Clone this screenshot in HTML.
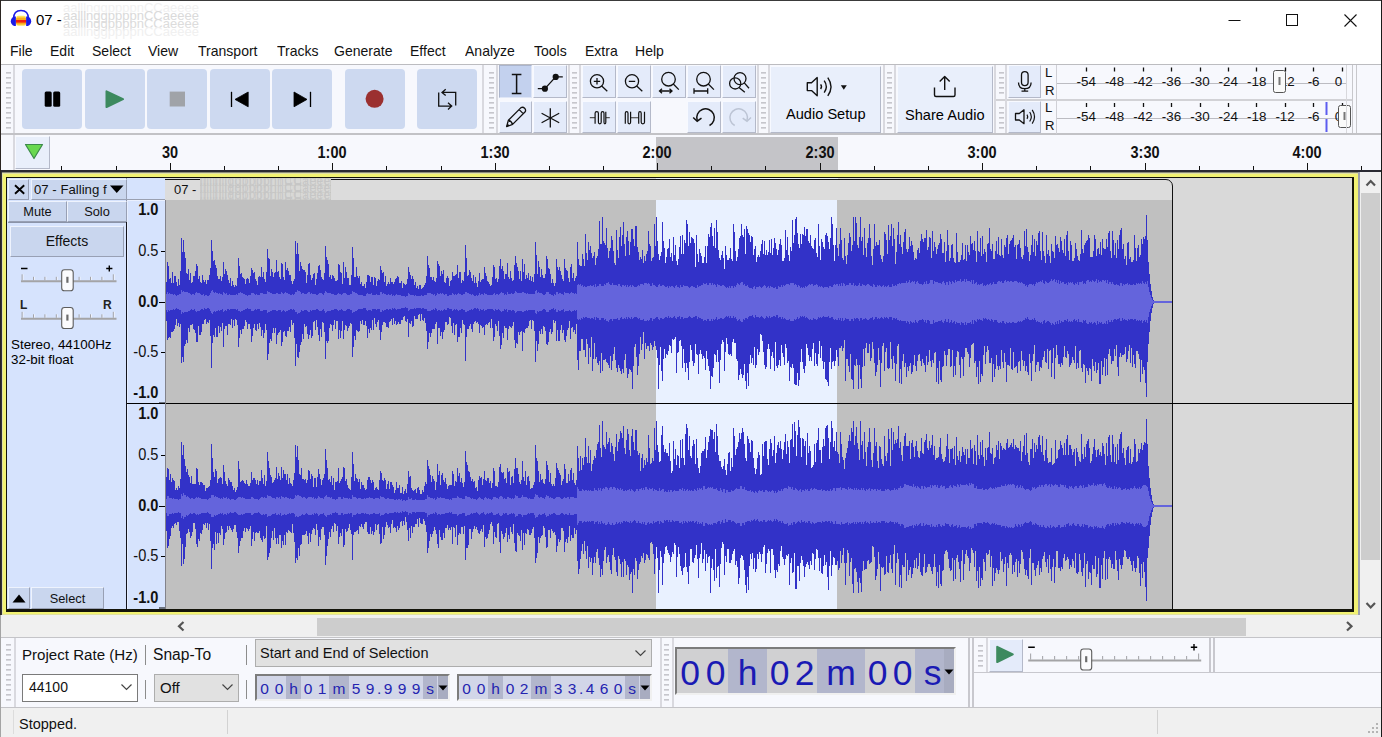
<!DOCTYPE html>
<html lang="en">
<head>
<meta charset="utf-8">
<title>07 - Audacity</title>
<style>
*{box-sizing:border-box;margin:0;padding:0}
html,body{width:1382px;height:737px;overflow:hidden;background:#fff}
body{position:relative;font-family:"Liberation Sans",sans-serif;font-size:14px;color:#000}
.a{position:absolute}
.t{position:absolute;white-space:nowrap;line-height:1}
svg{position:absolute;overflow:visible}
/* title + menu */
#title{left:36px;top:12px;font-size:15px}
.mi{position:absolute;top:43px;font-size:15px;line-height:1;white-space:nowrap;color:#111;transform:scaleX(0.935);transform-origin:0 50%}
/* toolbars */
#tb{left:1px;top:64px;width:1381px;height:71px;background:#f7f8fd;border-top:1px solid #bcbcc0;border-bottom:2px solid #c2c2c6}
.grab{position:absolute;width:5px;background:repeating-linear-gradient(to bottom,#c6c6cc 0,#c6c6cc 1px,#d8d8de 1px,#d8d8de 2px,transparent 2px,transparent 5px)}
.vl{position:absolute;width:2px;background:#d9d9df}
.big{position:absolute;top:69px;width:60px;height:60px;border-radius:4px;background:#cdd9f0}
.sm{position:absolute;width:33px;height:33px;background:#e4ebfa;border:1px solid;border-color:#f7f9ff #b4b9c9 #b4b9c9 #f7f9ff}
.sm.sel{background:#c3d1ee;border-color:#aab4cc #dfe6f6 #dfe6f6 #aab4cc}
.wide{position:absolute;top:66px;height:67px;background:#e9effb;border:1px solid;border-color:#f7f9ff #b4b9c9 #b4b9c9 #f7f9ff}
.mt{position:absolute;font-size:13.2px;line-height:1;white-space:nowrap;color:#111}
/* ruler */
#ruler{left:1px;top:135px;width:1381px;height:35px;background:#f7f8fd}
.rl{position:absolute;top:145px;font-size:14.5px;font-weight:bold;line-height:1;white-space:nowrap;color:#111;transform:translateX(-50%) scaleY(1.13);transform-origin:50% 50%}
/* track */
.tbtn{position:absolute;background:#c9d6ee;border:1px solid;border-color:#eef3fd #98a0b4 #98a0b4 #eef3fd;font-size:12.8px;line-height:1;text-align:center;white-space:nowrap;color:#111}
.vr{position:absolute;font-size:14.6px;line-height:1;white-space:nowrap;text-align:right;width:30.5px;left:128px;color:#111;transform:scaleY(1.1);transform-origin:50% 50%}
.vr b{font-weight:bold}
/* bottom */
#bb{left:1px;top:637px;width:1381px;height:71px;background:#f7f8fd;border-top:1px solid #c4c4c8;border-bottom:1px solid #c4c4c8}
.lab{position:absolute;font-size:14.5px;line-height:1;white-space:nowrap;color:#111}
.combo{position:absolute;height:28px;border:1px solid #adadad;background:#e1e1e1;font-size:14px;line-height:25px;padding-left:6px;white-space:nowrap;color:#111}
.tc{position:absolute;height:27px;background:#d2d6e8;border:2px solid;border-color:#7c7c7c #f0f0f0 #f0f0f0 #7c7c7c;overflow:hidden}
.tc span{position:absolute;top:0;height:23px;line-height:25px;font-size:15.5px;color:#2424b0;text-align:center}
.tc .u{background:#b2b6cc}
.big-tc span{height:44px;line-height:48px;font-size:35.5px;color:#1a1ab4}
#status{left:1px;top:708px;width:1381px;height:29px;background:#f0f0f0}
</style>
</head>
<body>
<!-- window frame -->
<div class="a" style="left:0;top:0;width:1382px;height:1px;background:#3a3a3a"></div>
<div class="a" style="left:0;top:0;width:1px;height:615px;background:#2a2420"></div>
<div class="a" style="left:0;top:615px;width:1px;height:122px;background:#a4a4a4"></div>
<div class="a" style="left:1381px;top:0;width:1px;height:737px;background:#1a1a1a;z-index:9"></div>
<!-- title bar -->
<svg class="a" style="left:9px;top:9px" width="24" height="20" viewBox="0 0 24 20">
  <rect x="7.200" y="6.800" width="9.800" height="10" rx="2" fill="#ffe45a"/>
  <rect x="7" y="8.600" width="10.200" height="6.800" rx="1.500" fill="#f9aa1e"/>
  <rect x="6.800" y="11" width="10.600" height="2.600" fill="#f0200e"/>
  <path d="M4.600 9.500Q4.600 1.400 12 1.400Q19.400 1.400 19.400 9.500" fill="none" stroke="#1a1ae6" stroke-width="1.500"/>
  <path d="M6.900 7.400V17H5.200Q1.800 15.500 1.800 12.200Q1.800 8.900 5.200 7.400Z" fill="#1a1ae6"/>
  <path d="M17.100 7.400V17H18.800Q22.200 15.500 22.200 12.200Q22.200 8.900 18.800 7.400Z" fill="#1a1ae6"/>
</svg>
<div class="t" id="title">07 -</div>
<div class="t" style="left:63px;top:1px;font-size:13px;color:#f1f1f1">aalllnggppppnCCaeeee</div>
<div class="t" style="left:63px;top:9px;font-size:13px;color:#dadada">aalllnggppppnCCaeeee</div>
<div class="t" style="left:63px;top:17px;font-size:13px;color:#dcdcdc">aalllnggppppnCCaeeee</div>
<div class="t" style="left:63px;top:25px;font-size:13px;color:#f0f0f0">aalllnggppppnCCaeeee</div>
<svg class="a" style="left:1220px;top:8px" width="150" height="24" viewBox="0 0 150 24">
  <path d="M8.5 12.5H20.5" stroke="#111" stroke-width="1" fill="none"/>
  <rect x="66.5" y="6.5" width="11" height="11" fill="none" stroke="#111" stroke-width="1"/>
  <path d="M124.5 6.5L136.5 18.5M136.5 6.5L124.5 18.5" stroke="#111" stroke-width="1.1" fill="none"/>
</svg>
<!-- menu bar -->
<div class="mi" style="left:10px">File</div>
<div class="mi" style="left:50px">Edit</div>
<div class="mi" style="left:92px">Select</div>
<div class="mi" style="left:148px">View</div>
<div class="mi" style="left:198px">Transport</div>
<div class="mi" style="left:277px">Tracks</div>
<div class="mi" style="left:334px">Generate</div>
<div class="mi" style="left:410px">Effect</div>
<div class="mi" style="left:465px">Analyze</div>
<div class="mi" style="left:534px">Tools</div>
<div class="mi" style="left:585px">Extra</div>
<div class="mi" style="left:635px">Help</div>
<!-- toolbar dock -->
<div class="a" id="tb"></div>
<div class="grab" style="left:6px;top:72px;height:57px"></div>
<div class="vl" style="left:13px;top:65px;height:68px"></div>
<div class="big" style="left:22px"></div>
<div class="big" style="left:85px"></div>
<div class="big" style="left:147px"></div>
<div class="big" style="left:210px"></div>
<div class="big" style="left:272px"></div>
<div class="big" style="left:345px"></div>
<div class="big" style="left:417px"></div>
<svg class="a" style="left:22px;top:69px" width="460" height="60" viewBox="0 0 460 60">
  <!-- pause -->
  <rect x="22.700" y="22.600" width="7" height="15.200" rx="1.500" fill="#000"/>
  <rect x="31.200" y="22.600" width="7" height="15.200" rx="1.500" fill="#000"/>
  <!-- play -->
  <path d="M84.500 22.300L101 30.200L84.500 38Z" fill="#3d8a5f" stroke="#3d8a5f" stroke-width="2" stroke-linejoin="round"/>
  <!-- stop -->
  <rect x="147.700" y="22.600" width="15.300" height="14.900" fill="#a0a3a8"/>
  <!-- skip start -->
  <path d="M209.500 22.800V38" stroke="#000" stroke-width="1.300"/>
  <path d="M226.200 23V37.800L213 30.400Z" fill="#000" stroke="#000" stroke-width="0.800" stroke-linejoin="round"/>
  <!-- skip end -->
  <path d="M288.500 22.800V38" stroke="#000" stroke-width="1.300"/>
  <path d="M272 23V37.800L285 30.400Z" fill="#000" stroke="#000" stroke-width="0.800" stroke-linejoin="round"/>
  <!-- record -->
  <circle cx="352.600" cy="29.800" r="9" fill="#9b3030"/>
  <!-- loop -->
  <g fill="none" stroke="#111" stroke-width="1.300">
  <path d="M416.700 23.400V37.100H429.200M426 33.800L429.700 37.100L426 40.400"/>
  <path d="M433.700 36.500V23.400H420.500M423.700 20.200L420 23.400L423.700 26.600"/>
  </g>
</svg>
<!-- tools toolbar -->
<div class="vl" style="left:482px;top:65px;height:68px"></div>
<div class="grab" style="left:489px;top:72px;height:57px"></div>
<div class="vl" style="left:496px;top:65px;height:68px"></div>
<div class="sm sel" style="left:499px;top:65px"></div>
<div class="sm" style="left:533px;top:65px;width:34px"></div>
<div class="sm" style="left:499px;top:101px;height:32px"></div>
<div class="sm" style="left:533px;top:101px;width:34px;height:32px"></div>
<svg class="a" style="left:499px;top:65px" width="68" height="68" viewBox="0 0 68 68">
  <!-- ibeam -->
  <path d="M12.800 9.600H22.400M12.800 28.600H22.400M17.600 9.600V28.600" stroke="#111" stroke-width="1.500" fill="none"/>
  <!-- envelope -->
  <path d="M38.800 23.700H45.900L56.700 11.900H63.800" stroke="#111" stroke-width="1.300" fill="none"/>
  <circle cx="45.900" cy="23.700" r="3.100" fill="#111"/><circle cx="56.700" cy="11.900" r="3.100" fill="#111"/>
  <!-- pencil -->
  <path d="M7.600 61.600L9.400 55.200L22 42.600Q24 41.600 25.600 43.200Q27.200 44.800 26.200 46.800L13.600 59.400Z M9.400 55.200Q12.200 55.800 13.600 59.400 M20.200 44.600L24.200 48.600" stroke="#111" stroke-width="1.300" fill="none" stroke-linejoin="round"/>
  <path d="M7.600 61.600L8.500 58.400L10.800 60.700Z" fill="#111"/>
  <!-- multi -->
  <path d="M51.300 43.300V62.500M42.600 48.200L60.200 57.700M60.200 48.200L42.600 57.700" stroke="#111" stroke-width="1.300" fill="none"/>
</svg>
<!-- edit/zoom toolbar -->
<div class="vl" style="left:568px;top:65px;height:68px"></div>
<div class="grab" style="left:572px;top:72px;height:57px"></div>
<div class="vl" style="left:579px;top:65px;height:68px"></div>
<div class="sm" style="left:582px;top:65px;width:34px"></div>
<div class="sm" style="left:617px;top:65px;width:34px"></div>
<div class="sm" style="left:652px;top:65px;width:34px"></div>
<div class="sm" style="left:687px;top:65px;width:34px"></div>
<div class="sm" style="left:722px;top:65px;width:34px"></div>
<div class="sm" style="left:582px;top:101px;width:34px;height:32px"></div>
<div class="sm" style="left:617px;top:101px;width:34px;height:32px"></div>
<div class="sm" style="left:687px;top:101px;width:34px;height:32px"></div>
<div class="sm" style="left:722px;top:101px;width:34px;height:32px"></div>
<svg class="a" style="left:582px;top:65px" width="175" height="68" viewBox="0 0 175 68">
  <g stroke="#111" stroke-width="1.300" fill="none">
  <!-- zoom in -->
  <circle cx="15" cy="16.300" r="6.600"/><path d="M19.700 21L25.300 26.200M11.800 16.300H18.200M15 13.100V19.500"/>
  <!-- zoom out -->
  <circle cx="50" cy="16.300" r="6.600"/><path d="M54.700 21L60.300 26.200M46.800 16.300H53.200"/>
  <!-- zoom sel -->
  <circle cx="86.500" cy="14.200" r="6.800"/><path d="M91.300 19L96.800 24.600M77.500 26H90M80 23.800L77.500 26L80 28.200M87.500 23.800L90 26L87.500 28.200"/>
  <!-- zoom fit -->
  <circle cx="121.500" cy="14.200" r="6.800"/><path d="M126.300 19L131.900 24.600M112 26H125.700M112 23.200V28.800M125.700 23.200V28.800"/>
  <!-- zoom toggle -->
  <circle cx="153.200" cy="18.400" r="5.600"/><circle cx="158" cy="13.600" r="6"/><path d="M162.300 17.900L167 23.200M157 22.500L162.800 27.300"/>
  </g>
  <g stroke="#111" stroke-width="1.200" fill="none">
  <!-- trim -->
  <path d="M7.800 52.700H13M24 52.700H27.800" stroke="#555"/>
  <path d="M13.100 58.800V48.200Q13.100 46.700 14.750 46.700Q16.400 46.700 16.400 48.200V57.300Q16.400 58.800 17.800 58.800Q19.200 58.800 19.200 57.300V48.200Q19.200 46.700 20.600 46.700Q22 46.700 22 48.200V57.300Q22 58.800 22.900 58.800Q23.800 58.800 23.800 57.300V46.700"/>
  <!-- silence -->
  <path d="M48.600 52.700H56.700" stroke="#555"/>
  <path d="M43.300 58.800V48.200Q43.300 46.700 44.650 46.700Q46 46.700 46 48.200V57.300Q46 58.800 47.300 58.800Q48.600 58.800 48.600 57.300V46.700M56.700 58.800V48.200Q56.700 46.700 57.950 46.700Q59.200 46.700 59.200 48.200V57.300Q59.200 58.800 60.850 58.800Q62.500 58.800 62.500 57.300V46.700"/>
  </g>
  <!-- undo -->
  <g stroke="#111" stroke-width="1.500" fill="none">
  <path d="M127.500 60.500A8.800 8.800 0 1 0 115.200 55.500"/><path d="M111.200 52.500L115.200 56.200L119.500 53.200"/>
  </g>
  <!-- redo (disabled) -->
  <g stroke="#bcc4d4" stroke-width="1.500" fill="none">
  <path d="M152.700 60.500A8.800 8.800 0 1 1 165 55.500"/><path d="M169 52.500L165 56.200L160.700 53.200"/>
  </g>
</svg>
<!-- audio setup -->
<div class="vl" style="left:757px;top:65px;height:68px"></div>
<div class="grab" style="left:761px;top:72px;height:57px"></div>
<div class="vl" style="left:768px;top:65px;height:68px"></div>
<div class="wide" style="left:770px;width:111px"></div>
<svg class="a" style="left:771px;top:66px" width="111" height="67" viewBox="0 0 111 67">
  <g stroke="#111" stroke-width="1.400" fill="none" stroke-linejoin="round">
  <path d="M36.300 16.800H40.500L46.200 11.600V29.800L40.500 24.600H36.300Z"/>
  <path d="M49.600 18.400Q51.400 20.700 49.600 23M53.200 14.700Q57.400 20.700 53.200 26.700M56.800 11.600Q63.200 20.700 56.800 29.800"/>
  </g>
  <path d="M69.800 19.300H75.800L72.800 23.800Z" fill="#111"/>
</svg>
<div class="t" id="asetup" style="left:786px;top:107px;font-size:14.600px">Audio Setup</div>
<!-- share audio -->
<div class="vl" style="left:883px;top:65px;height:68px"></div>
<div class="grab" style="left:887px;top:72px;height:57px"></div>
<div class="vl" style="left:894px;top:65px;height:68px"></div>
<div class="wide" style="left:897px;width:96px"></div>
<svg class="a" style="left:897px;top:66px" width="96" height="67" viewBox="0 0 96 67">
  <g stroke="#111" stroke-width="1.400" fill="none" stroke-linejoin="round">
  <path d="M37.500 21.500V29Q37.500 30.500 39 30.500H56.500Q58 30.500 58 29V21.500"/>
  <path d="M47.700 24V10.800M42.700 15.600L47.700 10.600L52.700 15.600"/>
  </g>
</svg>
<div class="t" id="sharea" style="left:905px;top:108px;font-size:14.600px">Share Audio</div>
<!-- meters -->
<div class="vl" style="left:994px;top:65px;height:68px"></div>
<div class="grab" style="left:999px;top:72px;height:22px"></div>
<div class="grab" style="left:999px;top:107px;height:22px"></div>
<div class="a" style="left:996px;top:99px;width:357px;height:2px;background:#d2d2d6"></div>
<div class="vl" style="left:1005px;top:65px;height:68px"></div>
<div class="sm" style="left:1008px;top:65px"></div>
<div class="sm" style="left:1008px;top:101px;height:32px"></div>
<svg class="a" style="left:1008px;top:65px" width="34" height="68" viewBox="0 0 34 68">
  <g stroke="#111" stroke-width="1.300" fill="none">
  <rect x="13.500" y="6.600" width="6.600" height="14" rx="3.300"/>
  <path d="M10.500 17.500Q10.500 23.700 16.800 23.700Q23.100 23.700 23.100 17.500M16.800 23.700V26M13.500 26.200H20.200"/>
  <path d="M7.500 48.500H11.300L16 44.800V58.700L11.300 55H7.500Z" stroke-linejoin="round"/>
  <path d="M19 49.600Q20.400 51.700 19 53.900M21.700 47Q24.900 51.700 21.700 56.500M24.200 44.800Q28.800 51.700 24.200 58.700" stroke-width="1.200"/>
  </g>
</svg>
<div class="mt" style="left:1045px;top:66px">L</div>
<div class="mt" style="left:1045px;top:84px">R</div>
<div class="mt" style="left:1045px;top:101px">L</div>
<div class="mt" style="left:1045px;top:119px">R</div>
<!-- meter bodies -->
<div class="a" style="left:1056px;top:65px;width:1px;height:34px;background:#d0d0d6"></div>
<div class="a" style="left:1056px;top:101px;width:1px;height:33px;background:#d0d0d6"></div>
<div class="a" style="left:1057px;top:83px;width:290px;height:1px;background:#bcbcc2"></div>
<div class="a" style="left:1057px;top:118px;width:290px;height:1px;background:#bcbcc2"></div>
<svg class="a" style="left:1056px;top:65px" width="300" height="69" viewBox="0 0 300 69">
  <g stroke="#111" stroke-width="1.300">
  <path d="M30.500 2.500V6.500M58.500 2.500V6.500M87.500 2.500V6.500M115.500 2.500V6.500M144.500 2.500V6.500M172.500 2.500V6.500M200.500 2.500V6.500M229.500 2.500V6.500M257.500 2.500V6.500M286.500 2.500V6.500"/>
  <path d="M30.500 38V42M58.500 38V42M87.500 38V42M115.500 38V42M144.500 38V42M172.500 38V42M200.500 38V42M229.500 38V42M257.500 38V42M286.500 38V42"/>
  </g>
  <g font-family="Liberation Sans, sans-serif" font-size="13.400" fill="#111" text-anchor="middle">
  <text x="30.200" y="21.200">-54</text><text x="58.600" y="21.200">-48</text><text x="87.000" y="21.200">-42</text><text x="115.500" y="21.200">-36</text><text x="143.900" y="21.200">-30</text><text x="172.300" y="21.200">-24</text><text x="200.700" y="21.200">-18</text><text x="229.100" y="21.200">-12</text><text x="257.600" y="21.200">-6</text><text x="282.600" y="21.200">0</text>
  <text x="30.200" y="56.300">-54</text><text x="58.600" y="56.300">-48</text><text x="87.000" y="56.300">-42</text><text x="115.500" y="56.300">-36</text><text x="143.900" y="56.300">-30</text><text x="172.300" y="56.300">-24</text><text x="200.700" y="56.300">-18</text><text x="229.100" y="56.300">-12</text><text x="257.600" y="56.300">-6</text><text x="282.600" y="56.300">0</text>
  </g>
  <!-- peak hold -->
  <rect x="269.500" y="37" width="2" height="13" fill="#5c5cf0"/><rect x="269.500" y="54" width="2" height="13" fill="#5c5cf0"/>
  <!-- thumbs -->
  <rect x="217.500" y="5.500" width="12" height="22" rx="2" fill="#fafafa" stroke="#555" stroke-width="1"/>
  <rect x="222.500" y="12" width="2" height="8" fill="#777"/>
  <rect x="282.500" y="40.500" width="12" height="22" rx="2" fill="#fafafa" stroke="#555" stroke-width="1"/>
  <rect x="287.500" y="47" width="2" height="8" fill="#777"/>
</svg>
<div class="a" style="left:1346px;top:65px;width:1px;height:68px;background:#d8d8dc"></div>
<div class="a" style="left:1352px;top:65px;width:1px;height:68px;background:#c8c8cc"></div>
<div class="a" style="left:1356px;top:65px;width:1px;height:68px;background:#c8c8cc"></div>
<!-- ruler -->
<div class="a" id="ruler"></div>
<div class="vl" style="left:13px;top:135px;height:35px"></div>
<div class="a" style="left:656px;top:137px;width:182px;height:33px;background:#c4c4c8"></div>
<div class="a" style="left:15px;top:136px;width:35px;height:33px;background:#e9effb;border:1px solid;border-color:#f7f9ff #b4b9c9 #b4b9c9 #f7f9ff"></div>
<svg class="a" style="left:15px;top:136px" width="35" height="33" viewBox="0 0 35 33">
  <path d="M10.500 8.500H27.500L19 22.500Z" fill="#69d84f" stroke="#3c8a4a" stroke-width="1.200" stroke-linejoin="round"/>
</svg>
<div class="rl" style="left:170px">30</div>
<div class="rl" style="left:332px">1:00</div>
<div class="rl" style="left:495px">1:30</div>
<div class="rl" style="left:657px">2:00</div>
<div class="rl" style="left:820px">2:30</div>
<div class="rl" style="left:982px">3:00</div>
<div class="rl" style="left:1145px">3:30</div>
<div class="rl" style="left:1307px">4:00</div>
<svg class="a" style="left:0;top:135px" width="1382" height="35" viewBox="0 0 1382 35">
  <path d="M170.500 28V35M332.500 28V35M495.500 28V35M657.500 28V35M820.500 28V35M982.500 28V35M1145.500 28V35M1307.500 28V35" stroke="#111" stroke-width="1"/>
  <path d="M61.500 31V35M116.500 31V35M224.500 31V35M278.500 31V35M386.500 31V35M441.500 31V35M549.500 31V35M603.500 31V35M711.500 31V35M765.500 31V35M874.500 31V35M928.500 31V35M1036.500 31V35M1090.500 31V35M1199.500 31V35M1253.500 31V35M1361.500 31V35" stroke="#111" stroke-width="1"/>
</svg>
<!-- track area frame -->
<div class="a" style="left:1px;top:170px;width:1381px;height:2px;background:#2a2a32"></div>
<div class="a" style="left:1px;top:172px;width:1359px;height:443px;background:#8c8c78"></div>
<div class="a" style="left:1px;top:172px;width:1px;height:443px;background:#30303c"></div>
<div class="a" style="left:2px;top:173px;width:1356px;height:442px;background:#e0e0a4"></div>
<div class="a" style="left:3px;top:174px;width:1355px;height:440px;background:#f2f272"></div>
<div class="a" style="left:6px;top:177px;width:1348px;height:435px;background:#14140a"></div>
<div class="a" style="left:1358px;top:172px;width:2px;height:443px;background:#9ca0ae"></div>
<!-- track info panel -->
<div class="a" style="left:7px;top:178px;width:158px;height:431px;background:#d6e3fd"></div>
<div class="a" style="left:126px;top:178px;width:1px;height:44px;background:#8e94a6"></div>
<div class="a" style="left:126px;top:222px;width:1px;height:387px;background:#14141c"></div>
<div class="a" style="left:127px;top:199px;width:38px;height:1px;background:#9aa0b0"></div>
<div class="a" style="left:127px;top:200px;width:38px;height:1px;background:#eaf0fe"></div>
<div class="a" style="left:127px;top:200px;width:1px;height:409px;background:#e6eefe"></div>
<div class="a" style="left:165px;top:200px;width:1px;height:409px;background:#82828a;z-index:3"></div>
<div class="tbtn" style="left:8px;top:179px;width:21px;height:21px"></div>
<svg class="a" style="left:8px;top:179px" width="21" height="21" viewBox="0 0 21 21"><path d="M7 6.300L16.200 14.700M16.200 6.300L7 14.700" stroke="#000" stroke-width="1.900"/></svg>
<div class="tbtn" style="left:31px;top:179px;width:96px;height:21px;text-align:left;padding:3px 0 0 2px;font-size:13.200px">07 - Falling f</div>
<svg class="a" style="left:106px;top:183px" width="20" height="12" viewBox="0 0 20 12"><path d="M4 2.500H17.500L10.750 10Z" fill="#000"/></svg>
<div class="tbtn" style="left:8px;top:201px;width:59px;height:21px;padding-top:4px">Mute</div>
<div class="tbtn" style="left:67px;top:201px;width:60px;height:21px;padding-top:4px">Solo</div>
<div class="a" style="left:8px;top:222px;width:118px;height:1px;background:#8a93a8"></div>
<div class="tbtn" style="left:10px;top:226px;width:114px;height:31px;padding-top:7px;font-size:14px">Effects</div>
<!-- sliders -->
<svg class="a" style="left:8px;top:260px" width="118" height="75" viewBox="0 0 118 75">
  <path d="M15.100 14.300V20.300M26.500 16.800V20.300M37.900 16.800V20.300M49.300 16.800V20.300M60.700 16.800V20.300M72.100 16.800V20.300M83.500 16.800V20.300M94.900 16.800V20.300M106.300 14.300V20.300M15.100 51.800V57.800M26.500 54.300V57.800M37.900 54.300V57.800M49.300 54.300V57.800M60.700 54.300V57.800M72.100 54.300V57.800M83.500 54.300V57.800M94.900 54.300V57.800M106.300 51.800V57.800" stroke="#eef2fc" stroke-width="1" fill="none"/>
  <path d="M14.100 14.300V20.300M25.500 16.800V20.300M36.900 16.800V20.300M48.300 16.800V20.300M59.700 16.800V20.300M71.100 16.800V20.300M82.500 16.800V20.300M93.900 16.800V20.300M105.300 14.300V20.300M14.100 51.800V57.800M25.500 54.300V57.800M36.900 54.300V57.800M48.300 54.300V57.800M59.700 54.300V57.800M71.100 54.300V57.800M82.500 54.300V57.800M93.900 54.300V57.800M105.300 51.800V57.800" stroke="#a4a4a8" stroke-width="1" fill="none"/>
  <path d="M13 21.300H108.500M13 58.800H108.500" stroke="#a4a4a6" stroke-width="2" fill="none"/>
  <path d="M13 8.500H19.500M98.200 8.500H104.400M101.300 5.400V11.600" stroke="#000" stroke-width="1.400"/>
  <rect x="53.700" y="9.700" width="11.500" height="21" rx="2.800" fill="#fbfbfd" stroke="#5c5c5c" stroke-width="1.100"/>
  <rect x="58.300" y="16.800" width="2.200" height="6" fill="#6c6c6c"/>
  <rect x="53.700" y="47.500" width="11.500" height="21" rx="2.800" fill="#fbfbfd" stroke="#5c5c5c" stroke-width="1.100"/>
  <rect x="58.300" y="54.600" width="2.200" height="6" fill="#6c6c6c"/>
</svg>
<div class="t" style="left:20px;top:299px;font-size:12px;font-weight:bold;color:#222">L</div>
<div class="t" style="left:103px;top:299px;font-size:12px;font-weight:bold;color:#222">R</div>
<div class="t" style="left:11px;top:337px;font-size:13.400px;line-height:15px;white-space:pre">Stereo, 44100Hz
32-bit float</div>
<div class="tbtn" style="left:8px;top:587px;width:22px;height:22px"></div>
<svg class="a" style="left:8px;top:588px" width="22" height="21" viewBox="0 0 22 21"><path d="M4.500 14.500H17.500L11 6.500Z" fill="#000"/></svg>
<div class="tbtn" style="left:31px;top:587px;width:73px;height:22px;padding-top:5px">Select</div>
<!-- vruler labels -->
<div class="vr" style="top:203px"><b>1.0</b></div>
<div class="vr" style="top:244px">0.5</div>
<div class="vr" style="top:295px"><b>0.0</b></div>
<div class="vr" style="top:345px">-0.5</div>
<div class="vr" style="top:386px"><b>-1.0</b></div>
<div class="vr" style="top:407px"><b>1.0</b></div>
<div class="vr" style="top:448px">0.5</div>
<div class="vr" style="top:499px"><b>0.0</b></div>
<div class="vr" style="top:549px">-0.5</div>
<div class="vr" style="top:591px"><b>-1.0</b></div>
<svg class="a" style="left:127px;top:178px" width="38" height="431" viewBox="0 0 38 431">
  <path d="M34 73.500H38M32 124.500H38M34 174.500H38M32 225H38" stroke="#000" stroke-width="1"/>
  <path d="M34 277.500H38M32 328.500H38M34 378.500H38M32 430H38" stroke="#000" stroke-width="1"/>
  <path d="M0 225.500H38" stroke="#000" stroke-width="1"/>
</svg>
<!-- waveform area -->
<div class="a" style="left:165px;top:178px;width:1187px;height:431px;background:#d9d9d9"></div>
<div class="a" style="left:656px;top:178px;width:182px;height:2px;background:#e9f1ff"></div>
<!-- clip header -->
<div class="a" style="left:160px;top:179px;width:1013px;height:30px;background:#dcdcdc;border:1px solid #111;border-top-right-radius:7px;clip-path:inset(0 0 9px 5px)"></div>
<div class="a" style="left:165px;top:200px;width:1007px;height:409px;background:#c0c0c0"></div>
<div class="a" style="left:656px;top:200px;width:181px;height:409px;background:#e9f1ff"></div>
<div class="a" style="left:1172px;top:186px;width:1px;height:423px;background:#111"></div>
<div class="t" style="left:174px;top:183px;font-size:13px;color:#111">07 -</div>
<div class="t" style="left:200px;top:178px;width:131px;height:22px;overflow:hidden;white-space:normal;font-size:12px;line-height:7px;letter-spacing:0.400px;color:#c6c6c6;background-color:#d8d8d6;background-image:repeating-linear-gradient(to right,rgba(150,150,150,0.160) 0,rgba(150,150,150,0.160) 1px,transparent 1px,transparent 5px),repeating-linear-gradient(to bottom,rgba(160,160,150,0.160) 0,rgba(160,160,150,0.160) 1px,transparent 1px,transparent 7px)">lllllllllggppppnnCCaeeeee lllllllllggppppnnCCaeeeee lllllllllggppppnnCCaeeeee lllllllllggppppnnCCaeeeee</div>
<div class="a" style="left:165px;top:403px;width:1187px;height:1px;background:#000"></div>
<svg class="a" style="left:0;top:0" width="1382" height="737" viewBox="0 0 1382 737" shape-rendering="crispEdges">
<path d="M165 302V282h2V262h1V266h1V279h1V278h1V283h1V272h1V283h1V276h2V282h1V286h1V279h1V285h1V271h1V238h1V252h1V240h1V252h1V258h1V273h1V274h1V269h1V280h1V273h1V283h1V282h1V276h2V271h1V264h1V266h1V279h1V276h1V282h1V283h1V275h1V280h1V282h1V280h1V284h1V280h2V275h1V268h1V240h1V251h1V261h1V260h1V265h1V268h1V276h1V279h2V276h1V281h1V277h1V262h1V274h1V269h1V271h1V275h1V280h1V283h1V278h1V286h1V281h1V285h1V287h1V285h1V286h1V278h1V258h1V266h1V274h1V273h1V277h1V278h1V279h1V284h1V279h1V278h1V279h1V283h1V276h1V268h1V270h1V273h1V272h1V279h1V281h1V285h1V277h1V276h1V277h1V267h1V277h1V272h1V279h1V282h1V272h1V249h1V258h1V259h1V276h1V269h1V272h1V277h1V273h1V272h1V260h1V272h1V271h1V277h1V279h1V263h1V264h1V277h1V280h1V262h1V270h1V268h1V271h1V275h2V281h1V284h1V281h1V279h1V241h1V254h1V243h1V254h1V271h1V262h1V266h1V269h1V270h2V272h1V283h1V275h1V264h1V263h1V275h1V280h1V278h1V274h1V273h1V285h1V279h1V273h1V266h1V265h1V270h1V277h1V279h1V280h1V273h1V246h1V257h1V260h1V264h1V277h1V275h1V279h1V275h1V276h1V278h1V281h2V280h1V264h1V265h1V272h1V273h1V284h1V262h1V278h1V267h1V272h1V278h2V285h2V275h1V247h1V258h1V277h2V267h1V276h1V278h1V276h1V284h1V282h1V286h2V284h1V288h1V282h1V275h2V276h1V282h1V277h2V285h1V277h1V278h1V286h1V281h1V279h1V280h1V266h1V270h1V273h1V272h1V282h1V276h1V286h1V284h1V282h1V284h1V278h1V282h2V284h1V282h1V279h1V278h1V276h1V277h1V283h2V281h1V288h1V283h1V284h1V285h1V284h1V279h1V267h1V272h1V275h1V279h1V276h1V279h1V285h1V282h1V288h1V286h1V289h1V285h2V289h1V288h1V287h1V285h1V283h1V276h1V256h1V265h1V268h1V277h2V280h1V277h1V281h1V282h1V278h1V261h1V264h1V266h1V276h1V271h1V274h1V270h1V282h1V283h1V278h1V276h1V278h1V286h1V281h1V280h1V272h1V276h2V275h1V274h1V265h1V278h1V272h2V283h1V280h1V281h1V272h1V245h1V258h1V276h1V275h1V270h1V272h1V278h1V281h1V275h1V283h1V277h1V283h1V287h1V281h1V273h1V282h1V280h1V279h2V267h1V273h1V276h1V281h1V282h1V284h1V286h1V285h1V277h1V265h1V267h1V279h1V278h1V282h1V279h1V266h1V259h1V269h1V266h1V271h1V279h1V274h2V263h1V277h1V279h1V271h1V278h1V281h1V280h1V265h1V256h1V263h1V267h1V271h1V279h1V271h1V281h1V259h1V272h1V264h1V279h1V275h1V278h1V273h1V280h1V276h1V281h1V277h1V282h1V274h1V242h1V255h1V274h1V261h1V267h1V277h1V269h1V275h1V278h2V274h1V256h1V259h1V268h1V269h1V274h1V283h1V279h1V283h1V286h1V283h1V259h1V267h1V270h1V267h1V271h1V275h1V279h1V281h1V259h1V268h1V270h1V271h1V278h1V282h1V267h1V264h1V278h1V273h1V281h1V278h1V276h1V242h1V259h1V265h1V266h2V254h1V259h1V266h1V234h1V253h1V260h1V242h1V250h1V246h1V253h1V258h1V256h1V252h1V265h1V258h1V256h1V249h1V221h1V244h2V217h1V241h1V243h1V245h1V228h1V248h1V258h1V251h1V248h1V236h1V240h1V251h1V263h1V265h1V230h1V250h1V258h1V237h1V227h1V246h1V235h1V222h1V244h1V256h1V237h1V231h1V241h1V255h1V242h1V229h2V239h1V246h1V226h2V247h1V252h1V260h1V257h1V259h1V250h1V263h1V256h1V261h1V254h1V251h1V231h1V244h1V246h1V261h1V258h1V257h1V224h1V246h1V217h1V241h1V254h1V260h1V256h1V252h1V222h1V241h1V248h1V263h1V257h1V249h1V248h1V239h1V257h1V253h1V261h1V237h1V255h1V245h1V261h1V265h1V259h1V247h1V236h1V254h1V235h1V254h1V240h1V243h1V220h1V224h1V246h1V232h1V243h1V237h1V238h1V239h1V243h1V267h1V235h1V254h1V262h1V249h1V253h1V256h1V263h2V257h1V246h1V263h1V246h1V234h1V237h1V227h1V223h1V236h1V246h1V228h1V248h1V220h1V232h1V250h1V258h1V260h1V255h1V251h1V258h1V269h1V246h1V255h1V260h2V258h1V248h1V259h1V261h1V224h1V232h1V251h1V261h1V257h1V249h1V238h1V236h1V224h1V235h1V237h1V229h1V254h1V226h1V229h1V233h1V235h1V242h1V236h1V237h1V255h1V249h1V246h1V262h1V257h1V255h1V257h1V251h1V244h1V240h1V254h1V241h1V255h1V250h1V255h1V252h1V240h1V253h1V239h1V255h1V248h1V238h1V243h1V249h1V255h1V250h1V244h1V239h1V245h1V261h2V258h1V230h1V250h1V237h1V255h1V261h1V247h1V251h1V220h1V243h1V235h1V219h1V217h1V233h1V244h1V248h1V234h1V244h1V234h1V235h1V227h1V236h1V229h2V241h1V243h1V235h1V246h1V248h1V249h1V240h1V238h1V253h1V257h1V224h1V246h1V260h1V239h1V242h1V247h1V249h1V235h1V233h1V236h1V242h1V249h1V238h1V217h1V224h1V245h1V261h1V245h1V228h1V248h1V256h1V244h1V228h1V240h1V258h1V260h1V238h1V256h1V264h1V255h1V243h1V233h1V237h1V251h1V245h1V217h1V241h1V217h1V223h1V245h1V248h1V237h1V217h1V241h1V237h1V255h1V228h1V248h1V257h1V243h1V238h1V224h1V238h1V256h1V265h1V249h1V224h1V246h1V242h1V245h2V240h1V255h1V259h1V262h1V256h1V232h1V234h1V240h1V254h1V225h1V240h1V236h1V224h1V246h1V228h1V239h1V264h1V252h1V235h1V222h1V244h1V235h1V247h1V254h1V242h1V232h1V229h1V249h1V252h1V249h1V237h1V246h1V241h1V245h1V252h1V260h1V258h1V259h1V250h1V248h1V253h1V241h1V234h1V239h1V242h1V238h2V230h1V250h1V247h1V237h1V238h1V258h1V231h1V251h1V242h1V247h1V254h1V249h1V245h1V243h1V234h1V239h1V253h2V242h1V262h1V251h1V230h1V245h1V261h1V258h1V245h1V244h1V258h1V262h1V263h1V233h1V252h1V262h2V260h1V255h1V243h1V260h1V259h1V245h1V261h1V245h1V252h1V255h1V236h1V244h1V243h1V250h1V241h1V251h1V262h1V231h1V251h1V252h1V238h1V256h1V236h1V254h1V249h1V252h1V262h1V244h1V243h1V228h1V249h1V251h1V244h1V259h2V251h1V241h1V254h1V237h1V255h1V256h1V239h1V255h1V258h1V245h1V247h1V238h1V235h1V254h1V244h1V241h1V240h1V238h1V235h1V247h1V245h1V259h1V245h1V244h1V240h1V248h1V257h1V259h1V255h1V231h1V246h1V229h1V247h1V252h1V261h1V255h1V245h1V235h1V252h1V239h1V256h1V241h1V245h1V233h1V231h1V251h1V260h1V232h1V251h1V256h1V263h1V235h1V254h1V250h1V256h1V263h1V244h1V251h1V252h1V258h1V236h1V245h1V244h1V248h1V252h1V237h1V241h1V250h1V253h1V239h1V256h1V235h1V231h1V251h1V260h1V241h1V245h1V261h2V258h1V243h1V249h1V256h1V260h1V261h1V254h1V230h1V249h1V253h1V245h1V243h1V241h1V240h1V235h1V238h1V257h3V251h1V235h1V239h1V256h1V249h1V248h1V254h1V242h1V255h1V239h1V248h1V249h2V239h1V247h1V233h1V231h1V251h1V258h1V231h1V240h1V255h1V243h1V258h1V240h1V249h1V235h1V230h1V228h1V249h1V244h1V259h1V256h1V265h1V243h1V242h1V259h1V257h1V262h2V260h1V235h1V248h1V261h1V248h1V245h1V257h1V255h1V239h1V244h1V237h1V239h1V236h1V215h1V240h1V262h1V274h1V284h1V291h1V297h1V300h1V301h18V303h-18V304h-1V308h-1V313h-1V321h-1V332h-1V344h-1V362h-1V397h-1V383h-1V370h-1V367h-1V374h-1V360h-1V382h-1V359h-1V354h-1V351h-2V368h-1V364h-1V355h-1V367h-1V348h-1V363h-1V345h-1V351h-1V359h-1V362h-1V347h-1V354h-1V355h-2V357h-1V353h-1V357h-1V376h-1V367h-1V345h-1V356h-1V349h-1V361h-2V364h-1V356h-1V349h-1V354h-1V375h-1V359h-1V376h-1V358h-1V367h-1V375h-1V361h-1V384h-2V363h-1V370h-1V373h-1V362h-1V371h-1V366h-1V359h-1V381h-1V369h-1V368h-1V375h-1V371h-1V368h-1V383h-1V365h-1V364h-1V372h-1V368h-1V350h-1V351h-1V368h-1V363h-1V369h-1V346h-1V363h-1V360h-1V357h-1V363h-1V365h-1V367h-1V354h-1V351h-1V358h-1V357h-1V346h-1V357h-1V365h-1V363h-1V367h-1V364h-2V355h-1V345h-1V358h-1V379h-1V348h-1V363h-1V377h-1V350h-1V351h-1V369h-1V349h-1V363h-1V362h-1V351h-1V357h-1V360h-1V368h-1V367h-1V371h-1V362h-2V365h-1V372h-1V345h-1V354h-1V361h-1V381h-1V363h-1V354h-1V375h-1V372h-1V366h-1V371h-1V361h-1V366h-1V360h-1V351h-1V371h-1V361h-1V362h-1V373h-1V366h-1V367h-1V368h-1V352h-1V370h-1V369h-1V348h-1V366h-1V365h-2V382h-1V362h-1V353h-1V368h-1V362h-1V350h-1V369h-1V366h-1V370h-1V366h-1V355h-1V369h-1V377h-1V364h-1V382h-1V358h-1V363h-2V350h-1V346h-1V352h-1V364h-1V346h-1V355h-1V376h-1V374h-1V382h-1V361h-1V384h-1V367h-1V377h-1V361h-1V363h-1V343h-1V344h-1V345h-1V358h-1V367h-1V354h-1V352h-1V348h-2V357h-1V376h-1V359h-1V357h-1V378h-1V365h-1V352h-1V351h-1V357h-1V375h-1V366h-1V377h-1V350h-1V366h-1V367h-1V349h-2V355h-1V366h-1V355h-1V351h-1V366h-1V367h-1V382h-1V380h-1V361h-1V384h-1V368h-1V382h-1V352h-1V353h-1V363h-1V360h-1V367h-1V361h-1V350h-1V362h-1V365h-1V356h-1V372h-1V365h-1V363h-1V359h-1V366h-1V361h-1V354h-1V355h-1V361h-1V371h-1V366h-1V355h-1V365h-1V372h-1V374h-1V363h-1V366h-1V371h-1V367h-1V377h-1V363h-1V367h-1V354h-1V361h-1V384h-1V369h-1V383h-1V344h-1V346h-1V364h-1V381h-1V363h-1V356h-1V369h-1V359h-1V342h-1V368h-1V369h-1V368h-1V348h-1V352h-1V371h-1V343h-1V346h-1V363h-1V387h-1V360h-1V348h-1V365h-1V372h-1V376h-1V363h-1V349h-1V342h-1V358h-1V361h-1V344h-1V353h-2V343h-1V348h-1V366h-1V349h-1V367h-1V388h-1V379h-1V365h-1V389h-1V365h-1V359h-1V366h-1V365h-1V389h-1V380h-1V379h-1V354h-1V372h-1V366h-1V359h-2V381h-1V340h-1V348h-1V351h-1V346h-1V348h-2V366h-1V357h-1V350h-1V361h-1V366h-1V361h-1V362h-1V369h-1V348h-1V362h-1V386h-1V382h-1V380h-1V379h-1V362h-1V369h-1V361h-1V346h-1V358h-1V341h-1V354h-1V366h-1V364h-1V353h-1V366h-1V343h-1V349h-1V361h-1V357h-1V361h-1V355h-1V348h-1V344h-1V366h-1V373h-1V369h-1V362h-1V349h-1V362h-1V380h-1V386h-1V373h-1V385h-2V384h-1V368h-1V364h-1V368h-1V367h-1V381h-1V361h-1V363h-1V348h-1V344h-1V365h-1V357h-1V353h-1V345h-1V366h-1V360h-1V365h-1V368h-1V366h-1V342h-1V371h-1V358h-1V352h-1V356h-1V369h-1V349h-1V344h-1V349h-1V367h-1V369h-1V365h-1V352h-1V341h-1V335h-1V334h-1V352h-1V355h-1V349h-1V365h-1V368h-1V347h-1V365h-1V358h-1V363h-1V355h-1V364h-1V386h-1V373h-1V389h-1V381h-1V364h-1V375h-1V378h-1V374h-1V369h-1V375h-1V380h-1V361h-1V359h-1V343h-2V339h-1V342h-1V356h-1V354h-1V355h-1V354h-1V344h-1V338h-1V352h-1V371h-1V342h-1V340h-1V344h-1V360h-1V383h-1V362h-1V350h-1V362h-1V355h-1V354h-1V368h-1V377h-1V376h-1V389h-1V371h-1V366h-1V359h-1V351h-1V370h-1V358h-1V356h-1V359h-1V354h-1V350h-1V354h-1V374h-1V355h-1V354h-1V344h-1V363h-1V366h-1V361h-1V350h-1V345h-1V362h-1V380h-1V368h-1V363h-1V372h-1V363h-1V349h-1V368h-1V346h-1V340h-1V341h-1V352h-1V353h-1V373h-1V337h-1V339h-1V340h-1V339h-1V353h-1V346h-1V345h-1V351h-1V355h-1V354h-1V358h-1V349h-1V359h-1V381h-1V371h-1V347h-1V365h-1V389h-1V358h-1V350h-1V346h-1V341h-1V347h-1V350h-1V345h-1V343h-1V351h-1V346h-2V349h-1V343h-1V359h-1V332h-1V344h-1V350h-1V337h-1V354h-1V366h-1V375h-1V357h-1V344h-1V347h-1V366h-1V389h-1V372h-1V370h-1V369h-1V374h-1V378h-1V368h-1V354h-1V360h-1V373h-1V369h-1V374h-1V371h-1V368h-1V365h-1V372h-1V368h-1V360h-1V347h-1V354h-1V361h-1V370h-1V356h-1V368h-1V365h-1V363h-1V362h-1V359h-1V360h-2V371h-1V353h-1V373h-1V361h-1V365h-1V363h-1V357h-1V359h-1V343h-1V359h-1V371h-1V337h-1V357h-1V348h-1V364h-1V344h-1V339h-1V357h-1V350h-2V339h-2V351h-2V370h-1V360h-1V324h-1V334h-1V330h-1V332h-1V327h-1V328h-1V339h-1V321h-1V328h-1V330h-1V336h-1V342h-1V340h-1V330h-1V333h-1V325h-1V330h-1V341h-2V330h-1V341h-1V321h-1V323h-1V320h-1V332h-1V334h-1V329h-1V332h-1V342h-1V345h-1V344h-1V331h-1V327h-1V326h-1V334h-1V329h-1V334h-1V331h-1V344h-1V351h-1V341h-1V362h-1V331h-1V321h-1V320h-1V329h-1V320h-1V321h-1V326h-1V328h-2V329h-1V333h-1V332h-1V351h-1V331h-1V332h-1V335h-1V332h-1V344h-1V343h-1V348h-1V340h-1V322h-1V326h-1V328h-1V327h-1V326h-1V329h-1V340h-1V328h-2V326h-1V338h-1V333h-1V345h-1V349h-1V336h-1V321h-1V331h-1V326h-1V324h-1V337h-1V341h-1V328h-1V319h-1V328h-1V322h-1V323h-1V325h-1V324h-1V325h-1V335h-1V327h-1V328h-1V326h-1V325h-1V333h-1V324h-1V322h-1V323h-1V321h-1V322h-1V324h-1V332h-1V329h-1V324h-1V326h-1V329h-2V337h-1V361h-1V325h-1V324h-1V320h-1V333h-1V328h-1V337h-2V342h-1V324h-1V325h-1V335h-1V323h-1V333h-1V326h-1V318h-1V317h-1V324h-1V325h-1V322h-2V330h-1V332h-1V339h-1V332h-1V336h-1V328h-2V344h-1V322h-1V324h-1V329h-3V333h-1V337h-1V333h-1V342h-1V349h-1V331h-1V323h-1V318h-1V321h-1V320h-1V314h-1V321h-1V314h-1V315h-1V319h-3V316h-1V326h-1V327h-1V321h-1V324h-1V323h-1V337h-1V319h-1V322h-1V321h-1V316h-1V317h-1V320h-2V324h-2V322h-1V324h-1V325h-1V321h-1V324h-1V318h-1V325h-1V319h-1V321h-1V322h-1V328h-1V327h-2V323h-1V322h-2V325h-1V332h-1V340h-1V330h-1V320h-1V322h-1V327h-1V324h-1V318h-1V330h-1V320h-1V330h-1V328h-1V333h-1V329h-1V338h-1V326h-1V321h-1V325h-2V320h-1V324h-1V321h-1V331h-1V332h-1V331h-1V330h-1V340h-1V336h-1V347h-1V357h-1V324h-1V323h-1V326h-1V328h-1V331h-1V326h-1V325h-1V330h-1V339h-1V321h-1V331h-1V338h-1V330h-1V339h-1V321h-2V329h-1V320h-1V325h-1V331h-1V325h-1V324h-1V328h-1V341h-1V343h-1V341h-1V359h-1V332h-1V323h-1V322h-1V337h-1V329h-1V341h-1V335h-1V327h-1V320h-1V330h-1V321h-1V322h-1V336h-1V338h-1V330h-1V335h-1V339h-1V334h-1V326h-1V327h-1V324h-1V339h-1V334h-1V342h-1V345h-1V352h-1V358h-1V357h-1V344h-1V366h-1V338h-1V323h-1V325h-1V320h-1V332h-1V327h-1V331h-2V337h-1V336h-1V331h-1V332h-1V342h-1V346h-1V330h-1V332h-1V333h-1V335h-1V344h-1V328h-1V333h-1V328h-1V333h-1V341h-1V339h-1V343h-1V354h-1V360h-1V330h-1V324h-1V333h-1V338h-1V330h-1V336h-1V327h-1V323h-1V329h-1V324h-1V331h-1V330h-1V324h-1V328h-1V336h-1V342h-1V329h-1V324h-2V329h-1V322h-1V320h-1V326h-1V329h-2V334h-1V330h-1V338h-1V347h-1V325h-1V320h-1V319h-1V326h-1V320h-1V328h-1V319h-1V325h-1V324h-2V335h-1V326h-2V329h-1V347h-1V323h-1V331h-1V327h-1V333h-1V326h-1V337h-2V328h-1V337h-1V335h-1V343h-1V368h-1V336h-1V320h-1V323h-1V322h-1V324h-1V319h-1V320h-1V324h-2V332h-1V335h-2V326h-1V342h-2V333h-1V330h-1V329h-1V324h-1V325h-2V332h-1V328h-1V343h-1V340h-1V344h-1V346h-1V362h-1V357h-1V363h-1V324h-1V327h-1V323h-1V326h-1V319h-1V325h-1V329h-1V331h-1V332h-2V338h-1V337h-1V338h-1V340h-1V321h-1V323h-1Z" fill="#3232c8"/>
<path d="M165 302V295h1V294h1V292h1V294h1V293h1V294h3V295h1V294h1V295h1V296h1V295h2V294h2V290h1V292h1V291h1V292h4V293h2V294h1V295h1V294h2V295h1V293h1V292h1V293h3V294h1V295h2V294h1V296h1V295h2V296h2V295h1V293h1V291h1V290h1V292h1V293h1V292h1V293h2V294h1V293h1V294h2V295h1V292h1V293h1V294h1V293h1V295h2V294h1V295h6V294h1V295h1V293h2V292h1V293h2V294h2V295h2V296h1V295h3V293h3V294h1V295h1V294h1V295h3V293h3V294h4V291h1V292h2V293h2V294h4V293h2V294h3V292h1V293h1V294h1V293h1V292h1V293h2V294h2V295h2V294h1V295h1V294h1V292h2V290h1V291h2V292h1V294h1V293h2V294h3V293h1V292h2V294h1V293h1V294h4V295h2V294h1V293h3V294h1V295h1V293h1V291h1V292h1V293h4V294h3V295h3V294h1V293h1V294h2V295h1V294h1V293h3V294h1V295h3V294h2V291h1V292h2V293h2V294h1V295h5V296h3V294h1V293h1V294h3V293h1V295h4V294h1V295h3V292h2V294h1V293h1V294h2V295h2V294h1V295h2V294h1V296h1V295h1V296h1V295h1V294h1V295h4V296h4V297h1V296h2V293h1V294h1V295h4V296h1V295h1V296h5V295h1V296h2V295h3V293h4V294h2V295h1V294h1V296h1V295h1V293h1V294h2V293h1V294h1V293h1V294h1V295h1V294h2V296h2V295h3V293h1V294h1V295h1V294h1V295h1V294h1V293h1V294h2V295h2V294h2V292h2V293h2V294h2V295h1V294h1V295h1V296h2V295h1V296h1V295h1V293h1V295h1V294h2V295h1V293h1V294h2V295h6V294h1V293h1V295h1V294h2V295h1V294h1V293h1V292h1V293h2V295h1V294h1V295h1V292h1V294h3V293h1V294h2V293h1V291h1V292h1V293h5V292h2V293h2V294h1V293h1V294h7V291h1V290h1V293h1V292h1V293h3V294h1V295h2V294h1V292h3V294h2V295h2V296h1V294h1V295h1V292h2V294h1V293h2V294h2V295h1V292h1V293h4V294h1V293h1V292h1V293h2V294h1V293h1V294h1V285h1V284h1V285h1V284h1V286h1V285h1V287h1V286h1V287h2V286h3V285h1V286h2V285h1V287h1V284h1V287h1V286h2V284h2V286h3V284h1V285h1V283h2V282h1V284h1V285h2V283h1V285h4V286h1V284h2V286h1V287h1V285h2V286h1V285h1V287h1V285h1V287h1V286h1V285h1V287h1V285h1V286h1V287h3V286h1V285h1V286h1V284h3V285h1V283h3V284h1V283h1V284h1V286h2V283h1V285h2V286h1V287h2V285h1V284h1V286h2V285h2V286h1V287h2V286h1V288h1V286h1V287h1V286h2V287h1V288h1V286h1V285h1V287h2V288h1V285h1V287h2V285h1V286h4V287h1V288h1V287h1V286h2V287h2V288h2V285h1V287h1V286h2V285h2V283h1V284h2V283h1V285h2V283h2V285h1V283h1V285h1V284h1V285h1V287h1V284h1V285h2V286h2V285h2V286h1V287h1V288h1V287h1V288h1V286h1V288h1V286h2V288h1V286h1V287h1V285h1V283h1V284h1V285h1V283h1V282h2V285h1V284h1V286h2V285h1V287h1V288h3V289h1V287h1V286h1V289h1V287h3V286h1V287h1V288h1V287h1V286h1V285h1V286h1V288h1V287h1V286h1V288h1V286h1V287h2V288h2V287h1V289h2V286h1V287h2V285h1V287h1V285h1V286h1V285h1V284h3V285h1V283h4V285h1V284h1V285h1V287h1V285h1V286h1V288h1V287h1V288h1V287h1V288h1V286h1V287h1V286h1V285h1V284h1V285h1V284h2V286h1V285h2V284h1V285h1V287h1V286h1V287h1V286h1V287h1V288h1V287h4V288h1V286h2V287h2V285h1V284h1V285h1V284h2V286h1V284h1V286h1V283h1V286h1V283h1V284h1V286h1V285h3V283h2V285h2V283h1V286h1V285h1V286h2V285h1V283h1V286h2V284h1V285h2V286h1V285h1V284h2V285h1V286h2V287h1V284h1V285h1V287h2V285h1V286h1V285h1V286h1V287h1V286h1V285h1V287h1V286h1V287h1V286h1V285h1V287h3V284h1V286h2V285h1V286h1V284h2V283h1V284h1V283h5V281h1V283h1V282h1V280h1V283h1V282h1V281h1V282h1V281h1V284h1V282h1V281h1V283h1V284h3V285h1V284h1V282h1V284h1V281h1V284h2V283h1V280h3V284h1V281h1V282h3V283h3V284h1V282h1V281h1V283h1V285h1V282h2V285h1V281h1V282h1V284h1V281h1V282h1V283h1V280h1V282h1V281h3V279h1V282h1V281h2V279h1V282h1V279h1V281h3V282h1V280h1V284h1V280h1V284h1V283h1V282h1V285h1V284h1V285h1V284h2V283h1V286h1V285h1V286h1V285h1V284h1V285h1V284h1V283h1V285h1V284h1V282h1V284h3V282h1V281h2V282h1V281h1V283h2V281h1V280h1V282h1V281h2V282h1V281h2V282h2V281h3V282h1V283h1V282h1V283h1V282h1V283h1V284h2V286h1V285h1V287h1V285h1V284h3V285h1V284h1V286h1V284h1V282h1V283h1V282h2V281h1V282h1V280h1V283h1V284h1V281h1V282h1V283h2V282h1V281h1V279h1V281h1V280h1V279h1V282h1V280h1V283h1V280h1V284h1V281h1V283h1V282h2V284h2V283h1V285h1V282h1V283h1V282h1V283h1V282h1V284h1V285h1V283h1V284h1V282h1V285h1V282h3V281h1V284h1V283h1V284h1V281h1V280h2V282h1V281h1V282h1V280h1V281h1V282h1V281h1V279h1V283h1V280h1V282h1V281h1V282h1V280h2V281h1V280h1V283h1V280h1V284h1V282h2V284h1V282h1V284h1V285h2V284h1V285h2V286h1V283h2V286h1V284h1V285h1V284h2V283h1V285h1V284h1V285h3V284h1V285h2V283h1V284h1V283h1V284h1V283h1V284h1V281h1V283h1V284h1V282h1V284h1V281h1V287h1V292h1V295h1V298h1V300h1V301h19V303h-19V304h-1V306h-1V309h-1V312h-1V317h-1V323h-1V320h-1V322h-1V320h-1V321h-1V323h-1V320h-1V321h-1V320h-1V321h-1V320h-1V321h-1V319h-2V320h-1V319h-3V320h-1V319h-1V321h-1V320h-2V319h-1V320h-1V318h-1V321h-2V318h-1V319h-2V320h-1V319h-2V320h-1V322h-1V320h-1V322h-2V320h-1V324h-1V321h-1V324h-1V323h-1V324h-2V322h-1V323h-1V322h-1V324h-1V321h-1V325h-1V323h-1V322h-1V323h-1V324h-1V322h-1V323h-1V322h-1V324h-2V323h-1V320h-1V321h-1V320h-1V323h-1V322h-3V319h-1V322h-1V320h-1V321h-1V319h-1V320h-1V322h-1V321h-1V322h-1V321h-1V322h-1V319h-1V321h-1V320h-2V322h-2V321h-1V323h-1V320h-1V324h-1V321h-1V324h-1V322h-1V325h-1V324h-1V323h-1V325h-1V323h-1V322h-1V321h-2V322h-1V323h-1V320h-1V321h-1V324h-1V322h-1V323h-1V322h-2V321h-1V322h-1V320h-1V318h-1V320h-1V319h-1V320h-3V319h-1V317h-1V319h-1V318h-1V320h-2V321h-1V322h-1V321h-1V322h-1V321h-1V322h-1V323h-3V322h-2V323h-2V322h-1V323h-2V322h-1V324h-1V323h-1V321h-2V323h-1V322h-1V323h-2V322h-1V320h-3V322h-1V320h-1V319h-1V321h-1V320h-1V319h-1V320h-1V319h-1V318h-1V319h-1V318h-1V321h-1V320h-2V319h-1V320h-1V319h-1V322h-1V321h-1V320h-1V324h-1V320h-1V324h-1V322h-1V323h-3V325h-1V322h-1V325h-1V323h-2V322h-1V325h-1V323h-3V322h-1V324h-1V321h-1V322h-1V323h-1V320h-1V322h-1V323h-1V319h-1V322h-2V319h-1V321h-1V323h-1V322h-1V320h-1V321h-3V322h-3V323h-1V320h-1V324h-3V321h-1V320h-2V323h-1V320h-1V322h-1V320h-1V319h-1V320h-3V321h-1V323h-1V322h-1V320h-1V323h-1V322h-1V323h-1V322h-1V321h-1V324h-1V322h-1V321h-1V323h-1V321h-5V320h-1V321h-1V320h-2V318h-1V319h-1V318h-2V320h-1V317h-3V319h-1V318h-1V317h-1V318h-1V317h-1V319h-1V318h-1V317h-1V318h-1V319h-1V318h-1V319h-1V317h-2V319h-1V320h-1V317h-1V318h-2V319h-1V320h-2V319h-1V318h-1V319h-2V320h-1V318h-2V321h-1V319h-1V318h-2V319h-1V318h-1V321h-1V319h-2V321h-2V319h-3V318h-1V320h-1V321h-1V318h-1V321h-1V318h-1V320h-1V318h-1V320h-2V319h-1V320h-1V319h-1V317h-2V318h-2V316h-1V317h-4V316h-1V317h-1V318h-1V317h-1V318h-1V317h-1V319h-1V320h-1V319h-2V318h-1V320h-2V319h-1V320h-1V319h-1V318h-1V317h-1V318h-1V316h-1V317h-1V316h-1V317h-1V316h-1V318h-1V319h-1V317h-1V319h-1V320h-1V319h-1V321h-4V319h-1V320h-3V319h-1V318h-1V319h-1V317h-1V319h-1V317h-2V318h-1V315h-2V317h-1V316h-2V317h-2V318h-1V316h-1V318h-1V317h-1V316h-1V318h-1V319h-1V318h-1V317h-1V316h-1V317h-1V318h-1V317h-3V315h-1V318h-1V317h-1V315h-1V316h-3V317h-1V319h-1V318h-2V320h-1V319h-1V322h-2V321h-1V319h-1V320h-1V321h-1V319h-1V317h-1V318h-1V316h-1V318h-2V316h-1V318h-1V316h-1V317h-1V316h-1V317h-1V318h-1V319h-2V318h-2V319h-2V320h-1V317h-1V319h-1V320h-1V319h-1V321h-1V319h-1V321h-2V319h-2V321h-1V320h-2V321h-1V319h-2V318h-2V317h-1V319h-1V316h-2V317h-2V318h-2V317h-1V316h-1V317h-1V318h-4V319h-1V317h-2V319h-1V316h-1V317h-2V319h-1V318h-1V316h-1V317h-1V318h-2V317h-1V318h-1V316h-1V318h-1V317h-2V318h-1V319h-2V318h-2V320h-1V319h-1V317h-2V318h-1V319h-2V321h-1V318h-2V320h-1V321h-1V320h-1V321h-3V319h-1V320h-3V318h-1V319h-1V318h-1V317h-3V318h-1V319h-1V317h-1V319h-1V318h-1V317h-1V319h-1V317h-1V319h-1V318h-1V319h-2V317h-1V318h-1V320h-2V318h-1V319h-4V321h-1V319h-2V320h-1V322h-1V321h-2V319h-1V320h-1V318h-3V320h-2V318h-2V317h-1V320h-1V317h-1V319h-1V318h-2V319h-1V318h-3V317h-2V318h-1V317h-1V319h-1V318h-1V320h-1V319h-1V320h-1V319h-1V310h-1V311h-1V310h-1V311h-2V312h-1V311h-1V310h-1V311h-4V312h-1V309h-1V310h-2V311h-2V310h-1V312h-2V309h-1V310h-1V308h-1V309h-2V310h-2V312h-3V310h-1V309h-2V310h-1V311h-3V312h-1V311h-1V314h-1V313h-1V310h-7V311h-1V310h-1V311h-2V312h-2V311h-5V312h-1V313h-1V311h-1V310h-2V311h-1V310h-3V312h-1V309h-1V310h-1V309h-1V311h-2V312h-1V311h-1V310h-1V309h-1V310h-2V309h-1V311h-1V310h-1V309h-6V310h-2V311h-1V309h-1V310h-2V309h-1V311h-1V309h-1V308h-1V309h-1V308h-2V309h-1V310h-1V309h-1V310h-2V311h-2V312h-2V310h-2V309h-2V310h-2V311h-1V310h-1V309h-1V310h-1V309h-1V310h-1V311h-1V309h-3V308h-2V310h-2V309h-1V310h-1V311h-1V310h-1V311h-1V310h-2V311h-1V309h-1V308h-1V310h-1V309h-1V310h-2V311h-4V309h-3V308h-2V309h-1V308h-5V309h-1V308h-1V309h-4V310h-1V311h-1V308h-2V307h-1V308h-4V309h-4V310h-1V309h-1V308h-1V309h-1V308h-1V310h-1V309h-2V310h-1V309h-2V310h-2V311h-1V310h-1V312h-2V309h-3V310h-1V309h-4V311h-1V310h-3V311h-1V310h-1V308h-3V309h-5V310h-1V311h-2V312h-2V313h-1V310h-2V309h-3V310h-1V311h-3V310h-1V309h-1V310h-2V311h-1V310h-1V309h-3V310h-3V311h-4V312h-1V313h-1V311h-1V309h-1V310h-1V311h-3V310h-1V309h-2V310h-4V311h-1V310h-1V312h-2V311h-1V310h-3V311h-2V310h-1V312h-1V313h-2V314h-1V312h-2V310h-1V309h-1V310h-1V309h-2V310h-2V311h-2V312h-1V311h-1V310h-1V311h-1V312h-1V310h-3V311h-2V310h-4V311h-2V312h-2V313h-1V310h-4V311h-3V309h-3V310h-1V309h-1V310h-1V311h-3V309h-3V308h-1V309h-2V310h-2V311h-2V312h-1V311h-2V309h-1V310h-1V309h-6V310h-1V309h-2V311h-1V310h-1V311h-1V312h-1V309h-1V310h-2V311h-1V310h-1V311h-2V312h-1V311h-1V312h-1V314h-1V313h-1V311h-1V309h-1V308h-2V309h-2V308h-1V310h-1V309h-2V310h-1V311h-3V312h-1V311h-1V309h-1V310h-2V309h-1V310h-1V311h-2V312h-4V313h-1V312h-1V314h-1V310h-2V309h-2V308h-1V309h-1V310h-1V309h-1V310h-3V311h-1V310h-1V312h-1V310h-1V309h-1Z" fill="#6464dc"/>
<path d="M165 506V490h1V477h1V468h1V469h1V480h1V474h1V482h1V478h1V480h1V481h1V490h1V488h1V490h1V486h1V488h1V479h1V442h1V455h1V445h1V459h1V466h1V472h1V469h1V475h1V477h1V483h1V476h1V484h4V468h1V469h1V482h1V485h1V482h2V483h1V485h2V491h1V488h2V487h1V486h1V480h1V444h1V458h1V472h1V477h1V469h1V471h1V483h1V479h1V478h1V477h1V478h1V484h1V465h1V472h1V481h1V484h1V486h1V478h1V480h1V482h2V486h1V490h1V488h1V492h1V490h1V487h1V461h1V469h1V482h1V481h1V480h1V481h1V483h1V484h1V480h1V484h1V486h2V483h1V472h1V480h1V478h2V480h1V484h1V480h1V485h1V481h2V470h1V478h1V484h1V475h1V486h1V481h1V452h1V461h1V468h1V475h1V477h1V483h1V482h1V480h1V478h1V467h1V479h1V473h1V476h1V480h1V467h1V478h1V470h1V474h2V480h1V474h1V484h1V478h1V483h1V484h1V486h1V480h1V473h1V445h1V457h1V446h1V460h1V474h1V475h1V468h1V479h2V480h1V479h1V483h1V480h1V470h1V471h1V479h1V474h1V476h1V487h1V478h2V487h1V477h1V469h1V474h1V479h1V485h1V480h1V478h1V474h1V449h1V460h1V468h1V480h1V479h1V482h1V476h1V485h1V478h1V490h1V482h2V481h1V468h1V483h1V481h1V479h1V477h1V467h1V468h1V481h1V479h1V485h1V488h1V489h1V490h1V477h1V452h1V464h1V481h1V474h1V478h1V479h1V482h1V479h1V489h1V482h1V485h2V488h1V490h1V489h1V480h1V477h2V480h1V483h1V480h1V482h1V490h1V488h1V487h1V489h1V490h1V480h1V471h1V473h1V480h1V481h1V478h1V480h1V489h1V484h1V481h1V489h1V482h2V485h1V487h1V493h1V490h1V482h1V488h2V485h1V493h2V487h1V494h1V491h1V489h1V493h1V484h1V471h1V477h1V476h1V488h1V490h1V491h1V490h1V489h1V493h1V488h1V487h1V490h1V494h2V490h1V492h1V486h1V482h1V484h1V460h1V466h1V469h1V475h1V482h1V476h1V479h1V481h1V490h1V482h1V464h1V475h1V471h1V485h1V475h1V473h1V480h1V482h1V478h1V484h1V489h1V486h1V485h3V471h1V474h1V486h1V481h1V482h1V468h1V476h1V473h1V482h1V478h1V483h1V487h1V482h1V451h1V462h1V465h1V471h1V472h1V477h1V481h1V479h1V482h1V481h1V488h1V487h1V491h1V480h1V476h1V478h1V477h1V485h1V479h1V471h1V480h1V481h1V478h2V483h1V481h1V488h1V483h1V468h1V471h1V486h2V487h1V482h1V467h1V464h1V472h1V473h1V472h1V479h1V478h1V483h1V468h1V472h1V471h1V485h1V477h1V476h1V483h1V469h1V458h1V468h2V474h1V482h1V484h1V480h1V461h1V477h1V481h1V471h1V485h1V477h1V476h1V481h1V489h1V488h2V485h1V482h1V445h1V458h1V461h1V471h1V482h1V474h1V480h1V479h1V483h1V484h1V479h1V461h1V465h1V470h1V482h1V473h1V484h1V486h1V484h1V486h1V478h1V463h1V468h1V470h1V473h1V475h1V485h1V481h1V479h1V464h1V469h1V483h2V474h1V481h1V470h1V468h1V480h1V473h1V483h1V485h1V480h1V446h1V458h1V471h1V456h1V470h1V458h1V465h1V457h1V438h1V457h1V463h1V446h1V463h1V450h1V471h1V464h1V460h1V456h1V458h1V450h1V444h1V442h1V425h1V448h1V457h1V421h1V445h1V447h1V449h1V432h1V444h1V442h1V438h1V452h1V443h1V446h1V454h1V461h1V447h1V434h1V451h1V442h1V439h1V431h1V433h1V438h1V426h1V448h1V454h1V440h1V429h1V434h1V450h1V456h1V436h1V429h1V442h1V450h1V430h2V451h1V455h1V453h1V471h1V458h1V454h1V468h1V460h1V465h1V458h1V462h1V435h1V448h1V464h1V463h1V458h1V461h1V428h1V450h1V421h1V445h1V452h1V462h1V461h1V435h1V426h1V445h1V452h1V449h1V453h2V456h1V443h1V461h1V473h1V471h1V441h1V459h1V449h1V465h1V455h1V456h1V468h1V440h1V458h1V439h1V458h1V465h1V434h1V424h1V428h1V450h1V436h1V456h1V458h1V446h1V440h1V444h1V464h1V439h1V458h1V468h1V473h1V466h1V453h1V451h2V449h1V437h1V458h1V450h1V442h1V436h1V429h1V430h2V439h1V432h1V452h1V424h1V436h1V455h1V461h2V467h1V469h1V466h1V459h1V470h1V475h1V464h1V453h1V452h1V471h1V458h1V467h1V428h1V436h1V455h1V449h1V447h1V442h1V433h1V439h1V433h1V428h1V432h1V444h1V458h1V461h1V436h1V439h1V443h1V452h1V440h1V441h1V458h1V468h1V474h1V469h1V458h1V452h1V455h1V475h1V474h1V444h1V456h1V442h1V441h2V459h1V465h1V449h1V439h1V443h1V456h1V450h1V436h1V463h1V453h1V445h1V442h1V448h1V441h1V449h1V459h1V450h1V442h1V434h1V454h1V441h1V447h1V463h1V440h1V439h1V424h1V447h1V422h1V431h1V456h1V435h1V420h1V427h1V438h1V457h1V438h1V439h1V446h1V441h1V465h1V433h1V453h1V446h1V451h1V468h1V467h1V465h1V444h1V462h1V443h1V440h1V428h1V450h2V463h1V447h1V439h1V446h1V428h1V426h1V425h1V438h1V459h1V442h1V421h1V428h1V447h1V441h1V451h1V432h1V452h1V454h1V463h1V432h1V444h1V457h1V460h1V469h1V458h1V453h1V448h1V441h1V435h1V441h1V428h1V432h1V421h1V445h1V436h1V427h1V443h1V449h1V460h1V421h1V445h1V441h1V459h1V432h1V452h1V466h1V447h1V442h1V428h1V442h1V460h1V467h1V453h1V428h1V446h1V442h1V461h1V468h1V446h1V447h1V459h1V464h1V466h1V436h1V456h1V461h1V453h1V429h1V439h1V466h1V428h1V450h1V432h1V444h1V440h1V443h1V439h1V426h1V448h1V442h1V455h1V461h1V446h1V436h1V433h1V446h3V441h1V459h1V443h1V440h1V447h1V457h1V446h1V441h1V451h1V457h1V458h1V451h1V438h1V453h1V454h1V442h1V440h1V434h1V448h1V450h1V441h1V448h1V445h1V435h1V455h1V446h1V460h1V458h2V457h1V447h1V438h1V454h1V459h1V462h1V461h1V457h1V446h1V434h1V449h1V463h1V449h2V448h1V459h1V446h1V465h1V437h1V456h1V460h1V451h1V462h1V456h1V447h1V452h1V455h1V449h1V464h1V449h1V458h2V440h1V449h1V448h1V464h1V445h1V451h1V465h1V435h1V455h1V459h1V442h1V455h1V440h1V457h1V466h1V448h1V460h1V448h1V447h1V432h1V453h1V454h1V448h1V464h1V458h1V457h1V445h1V450h1V441h1V459h1V443h1V446h1V450h1V448h1V449h1V450h1V443h1V439h1V448h1V447h1V445h1V443h1V447h1V439h1V449h1V445h1V447h1V448h2V451h1V441h1V461h1V452h1V446h1V435h1V455h1V433h1V453h1V462h1V465h1V449h2V439h1V458h1V443h1V452h1V445h1V449h1V437h1V435h1V445h1V452h1V436h1V455h1V461h1V450h1V439h1V458h1V463h1V462h2V448h1V465h1V464h1V463h1V440h1V459h1V458h1V450h1V449h1V441h1V445h1V448h1V455h1V443h1V455h1V439h1V435h1V455h1V445h2V449h1V455h1V452h1V449h1V466h1V448h1V452h1V457h1V461h1V462h1V434h1V454h1V459h1V447h1V457h1V444h1V441h1V439h1V448h1V463h1V461h1V454h1V447h1V439h1V450h1V457h1V450h1V449h1V455h1V452h1V456h1V443h1V446h1V454h1V465h1V443h1V456h1V437h1V435h1V455h1V462h1V435h1V444h1V462h1V447h1V464h1V444h1V460h1V439h1V434h1V432h1V453h1V448h1V458h1V465h1V450h1V447h1V446h1V463h1V449h1V464h1V462h1V457h1V439h1V444h1V462h1V461h1V449h1V453h1V449h1V443h1V450h1V445h1V442h1V443h1V419h1V444h1V466h1V478h1V488h1V495h1V501h1V504h1V505h18V507h-18V508h-1V512h-1V517h-1V525h-1V536h-1V548h-1V558h-1V601h-1V587h-1V572h-1V562h-1V578h-1V564h-1V586h-1V573h-1V558h-1V556h-1V568h-1V572h-1V568h-1V561h-1V571h-1V565h-1V561h-1V557h-1V559h-2V557h-1V551h-1V550h-1V557h-1V565h-1V569h-1V565h-1V559h-1V580h-1V571h-1V560h-1V551h-1V569h-2V564h-1V568h-1V560h-1V557h-1V559h-1V579h-1V559h-1V580h-1V551h-1V558h-1V579h-1V565h-1V588h-2V558h-1V574h-1V577h-1V556h-1V569h-2V565h-1V585h-1V573h-1V572h-1V579h-1V561h-1V564h-1V587h-1V553h-1V568h-1V576h-1V572h-1V560h-1V554h-1V572h-1V574h-1V573h-1V553h-1V568h-1V561h-1V559h-1V567h-1V565h-1V569h-1V559h-1V557h-1V560h-1V561h-1V554h-1V558h-1V569h-1V567h-1V571h-1V568h-2V551h-2V567h-1V583h-1V559h-1V567h-1V581h-1V569h-1V555h-1V573h-1V559h-1V567h-1V562h-1V552h-1V556h-1V559h-1V572h-1V568h-1V575h-1V561h-1V565h-1V568h-1V576h-1V570h-1V563h-2V585h-1V549h-1V558h-1V579h-1V576h-1V570h-1V575h-1V569h-1V559h-1V552h-1V550h-1V564h-1V573h-1V561h-1V577h-1V559h-1V562h-1V572h-1V565h-1V574h-1V555h-1V553h-1V555h-1V568h-1V563h-1V586h-1V557h-1V564h-1V572h-1V559h-1V561h-1V552h-1V570h-1V574h-1V570h-1V568h-1V573h-1V581h-1V568h-1V586h-1V556h-1V567h-1V550h-1V554h-1V555h-1V553h-1V571h-1V562h-1V559h-1V580h-1V578h-1V586h-1V567h-1V588h-1V571h-1V581h-1V551h-1V567h-1V553h-1V550h-1V548h-1V563h-1V571h-1V558h-1V556h-1V550h-1V554h-1V564h-1V580h-1V550h-1V561h-1V582h-1V569h-1V562h-1V555h-1V558h-1V579h-1V560h-1V581h-1V558h-1V570h-1V571h-1V568h-1V559h-1V552h-1V550h-1V551h-1V554h-1V570h-1V571h-1V586h-1V584h-1V565h-1V588h-1V572h-1V586h-1V567h-1V554h-1V567h-1V574h-1V571h-1V567h-1V564h-2V567h-1V572h-1V573h-1V554h-1V567h-1V576h-1V575h-1V572h-1V553h-1V566h-1V569h-1V558h-1V568h-1V560h-1V568h-1V574h-1V578h-1V567h-1V570h-1V575h-1V560h-1V581h-1V553h-1V567h-2V565h-1V588h-1V575h-1V587h-1V559h-1V553h-1V563h-1V585h-1V545h-1V554h-1V573h-1V569h-1V555h-1V563h-1V573h-1V572h-1V556h-1V574h-1V575h-1V567h-1V568h-1V567h-1V591h-1V564h-1V552h-1V569h-1V576h-1V580h-1V557h-1V547h-1V546h-1V562h-1V563h-1V564h-1V560h-1V561h-1V569h-2V570h-1V561h-1V571h-1V592h-1V583h-1V578h-1V593h-1V582h-1V572h-1V568h-1V569h-1V593h-1V584h-1V558h-1V562h-1V576h-1V553h-1V550h-1V563h-1V585h-1V563h-1V548h-1V555h-1V563h-1V551h-1V568h-1V570h-1V561h-1V565h-2V558h-1V557h-1V565h-1V576h-1V551h-1V566h-1V590h-1V577h-1V562h-1V565h-1V555h-1V566h-1V574h-1V573h-1V558h-1V571h-1V558h-1V550h-1V549h-1V559h-1V570h-1V554h-1V553h-1V565h-1V561h-1V569h-1V565h-1V562h-1V564h-1V567h-1V577h-1V566h-1V560h-1V556h-1V563h-1V581h-1V566h-2V589h-2V553h-1V572h-1V573h-1V558h-1V563h-1V585h-1V554h-1V556h-1V555h-1V559h-1V565h-1V559h-1V557h-1V546h-1V551h-1V566h-1V564h-1V572h-1V570h-1V578h-1V570h-1V555h-1V549h-2V573h-1V551h-1V549h-1V553h-1V564h-1V573h-1V545h-1V547h-1V554h-1V562h-1V554h-1V552h-1V559h-1V554h-1V569h-1V572h-1V558h-1V569h-1V553h-1V559h-1V554h-1V566h-1V590h-1V577h-1V593h-1V585h-1V570h-1V560h-1V556h-1V555h-1V558h-1V578h-1V584h-1V567h-1V561h-1V565h-1V549h-1V551h-1V554h-1V560h-1V563h-2V549h-2V562h-1V556h-1V575h-1V544h-1V542h-1V548h-1V564h-1V587h-1V566h-1V567h-1V578h-1V549h-1V581h-1V570h-1V559h-1V568h-1V593h-1V556h-1V557h-1V563h-1V554h-1V571h-1V550h-1V559h-1V563h-1V543h-1V554h-1V558h-1V578h-1V559h-1V545h-1V555h-1V558h-1V563h-1V562h-1V549h-2V566h-1V584h-1V572h-1V567h-1V553h-1V567h-1V568h-1V575h-1V571h-1V566h-1V554h-1V547h-1V557h-1V577h-1V545h-1V543h-1V554h-1V552h-1V557h-1V562h-1V555h-1V553h-1V550h-1V546h-1V547h-1V554h-1V563h-1V585h-1V557h-1V551h-1V570h-1V593h-1V558h-1V547h-1V559h-1V574h-1V554h-1V544h-1V542h-1V543h-1V560h-1V558h-1V555h-1V554h-1V560h-1V563h-1V553h-1V558h-1V556h-1V562h-1V564h-1V570h-1V579h-1V561h-1V558h-1V575h-1V569h-1V593h-1V572h-1V574h-1V580h-1V567h-1V565h-1V575h-1V561h-1V559h-1V577h-1V562h-1V577h-1V564h-1V559h-1V556h-1V576h-1V572h-1V560h-1V557h-1V548h-1V555h-1V574h-1V570h-1V562h-1V555h-1V557h-1V563h-1V547h-1V550h-1V561h-1V575h-1V569h-1V577h-1V565h-1V558h-1V549h-1V552h-1V563h-1V557h-1V563h-1V575h-1V558h-1V562h-1V557h-1V568h-1V546h-1V559h-1V551h-1V541h-1V554h-1V544h-1V551h-1V559h-1V569h-1V574h-1V561h-1V530h-1V534h-1V528h-1V538h-2V535h-1V541h-1V526h-1V537h-1V543h-1V539h-1V542h-1V552h-1V531h-1V528h-2V540h-1V542h-1V539h-1V546h-1V552h-1V535h-1V532h-1V533h-1V531h-1V529h-1V538h-1V530h-2V547h-1V548h-1V537h-1V528h-1V526h-1V535h-1V536h-1V538h-1V543h-1V537h-1V553h-1V558h-1V563h-1V538h-1V527h-1V529h-1V533h-1V535h-2V530h-1V529h-1V534h-1V533h-1V545h-1V533h-1V550h-1V530h-1V541h-1V536h-1V535h-1V533h-1V552h-1V551h-1V543h-1V524h-1V534h-1V532h-1V527h-1V539h-1V535h-1V542h-1V528h-1V533h-1V537h-1V539h-1V534h-1V531h-1V553h-1V542h-1V523h-1V524h-1V538h-1V537h-1V532h-1V544h-1V526h-1V522h-1V524h-1V530h-1V534h-1V538h-1V539h-1V537h-1V547h-1V525h-1V532h-1V529h-1V531h-1V534h-1V533h-1V530h-1V527h-1V529h-1V526h-1V529h-1V532h-1V539h-1V529h-2V545h-1V548h-2V560h-1V526h-1V534h-1V527h-2V534h-1V533h-1V535h-1V545h-1V525h-1V537h-1V528h-1V527h-1V544h-1V527h-1V530h-1V528h-1V530h-1V525h-1V528h-2V538h-1V533h-1V540h-2V537h-1V530h-1V548h-1V544h-1V534h-1V530h-1V527h-1V531h-1V534h-1V537h-1V534h-1V541h-1V548h-1V553h-1V532h-1V525h-1V521h-1V519h-1V524h-2V523h-1V518h-1V527h-1V519h-1V524h-2V527h-2V533h-1V526h-1V538h-1V528h-1V541h-1V530h-1V522h-1V517h-1V525h-1V521h-1V526h-1V521h-1V522h-1V528h-1V530h-1V526h-1V532h-1V528h-1V527h-1V528h-1V520h-1V524h-1V533h-1V527h-1V528h-1V525h-1V522h-1V527h-1V535h-1V539h-1V527h-1V543h-1V544h-1V534h-1V524h-1V525h-1V530h-1V524h-1V532h-1V535h-1V531h-1V534h-1V527h-1V534h-2V532h-1V522h-2V524h-1V529h-1V527h-1V524h-1V527h-1V526h-1V534h-1V530h-1V531h-1V532h-2V535h-1V560h-1V534h-1V530h-1V524h-1V528h-1V531h-1V532h-1V529h-1V545h-1V547h-1V529h-1V536h-1V533h-1V537h-1V544h-1V526h-1V531h-1V524h-1V523h-1V532h-1V526h-1V529h-1V537h-1V532h-1V539h-1V546h-1V556h-1V565h-1V535h-1V527h-2V529h-1V540h-1V537h-1V546h-1V530h-1V524h-1V535h-1V529h-1V528h-1V530h-1V534h-1V542h-1V533h-1V544h-1V536h-1V531h-1V534h-1V535h-3V544h-1V545h-1V556h-1V548h-1V560h-1V558h-1V563h-1V542h-1V533h-1V524h-1V533h-1V532h-1V531h-1V530h-1V533h-1V532h-1V545h-1V535h-1V545h-1V541h-1V548h-1V535h-2V544h-1V538h-1V544h-1V538h-1V528h-1V540h-1V531h-1V538h-1V548h-1V553h-1V557h-1V560h-1V526h-1V538h-1V539h-1V536h-1V542h-1V540h-1V538h-1V531h-1V533h-2V532h-1V533h-1V541h-1V532h-1V539h-1V546h-1V526h-1V529h-1V531h-1V529h-1V528h-1V532h-1V528h-1V531h-1V538h-2V541h-1V546h-1V553h-1V538h-1V532h-1V525h-2V529h-1V532h-1V530h-1V528h-1V526h-1V530h-1V526h-1V532h-1V533h-1V539h-1V545h-1V529h-1V526h-1V535h-1V533h-1V543h-1V533h-1V544h-1V532h-1V550h-1V544h-1V548h-1V569h-1V541h-1V524h-1V530h-1V523h-1V528h-1V523h-1V525h-1V524h-1V530h-1V534h-1V533h-1V541h-1V539h-1V547h-1V544h-1V529h-1V523h-2V532h-1V536h-1V538h-1V532h-1V529h-1V533h-1V534h-1V547h-1V559h-1V564h-1V544h-1V566h-1V538h-1V531h-1V522h-2V525h-1V523h-1V524h-1V528h-1V526h-1V528h-1V536h-1V539h-1V546h-1V548h-1V531h-1V528h-1Z" fill="#3232c8"/>
<path d="M165 506V499h2V496h2V498h3V499h1V498h1V499h4V500h1V499h2V494h1V496h1V493h1V495h2V497h1V496h1V497h1V498h1V499h1V498h2V499h2V498h1V497h1V498h1V497h1V498h2V499h6V500h1V499h1V498h2V495h3V497h1V496h1V497h2V498h2V499h1V498h1V499h1V497h1V498h2V497h1V499h1V498h1V499h1V500h1V499h3V500h2V499h1V498h1V497h3V498h1V497h1V498h2V499h6V497h2V498h1V499h4V500h1V499h1V498h1V497h2V498h1V497h1V498h2V495h1V496h3V497h1V498h3V499h1V497h2V498h1V497h1V499h1V496h1V497h2V498h1V497h2V498h2V499h1V498h1V499h3V498h1V495h1V496h1V495h2V496h2V497h1V498h1V497h2V498h1V499h1V498h1V497h4V498h1V497h1V499h1V498h1V499h1V498h1V496h1V497h1V498h3V499h1V497h1V496h1V495h1V497h3V498h1V497h1V499h3V500h1V499h2V497h3V499h2V497h1V498h4V499h1V498h1V499h2V495h1V497h3V498h1V499h1V498h3V499h3V498h1V499h1V498h3V497h1V498h3V499h2V498h4V499h1V496h1V497h3V498h1V499h2V498h2V499h5V500h2V499h1V500h1V499h2V500h1V499h1V501h1V500h2V501h1V500h2V497h1V499h2V498h1V500h3V499h1V500h9V499h2V495h1V497h2V498h3V499h1V498h1V500h1V499h1V497h1V498h2V497h1V498h4V499h4V500h1V499h1V500h1V498h5V496h1V497h1V498h3V499h3V496h2V497h3V498h1V499h1V498h1V499h3V500h1V499h1V498h1V497h1V498h1V499h2V500h1V498h1V497h1V498h1V499h1V498h1V499h2V500h1V499h1V497h3V498h2V499h1V497h1V496h2V497h1V499h1V498h1V499h2V497h2V498h2V499h1V498h1V499h1V498h1V495h1V496h2V498h3V497h1V495h1V497h4V498h1V499h1V498h1V499h4V497h1V494h1V495h2V497h1V498h1V497h2V498h2V499h1V497h1V495h1V496h2V498h1V497h1V498h2V499h2V498h1V497h4V498h1V499h2V498h1V497h1V498h2V497h2V499h1V497h4V498h3V487h1V489h1V491h3V489h1V490h1V491h1V490h2V491h1V490h1V491h1V490h1V491h3V488h1V490h2V491h1V488h1V490h1V488h1V491h1V489h1V488h1V489h1V487h2V488h1V490h1V488h1V487h2V489h1V487h2V488h1V490h1V488h1V489h1V490h1V488h1V490h1V489h1V491h2V490h1V491h1V490h2V489h1V491h1V489h1V490h1V491h1V492h1V491h1V489h2V491h1V489h2V488h1V490h1V488h1V490h1V487h2V489h1V490h1V488h1V489h2V488h1V491h1V489h1V490h2V491h2V488h1V491h1V490h1V489h2V492h1V491h1V492h2V490h1V492h1V490h2V492h1V491h1V490h1V491h4V489h2V490h1V488h1V491h1V489h1V491h1V490h1V489h1V491h1V490h1V491h1V490h1V491h2V489h1V490h1V491h1V488h1V490h1V488h1V489h1V488h1V490h1V486h2V489h2V488h1V487h1V488h1V487h1V488h1V487h1V489h3V488h1V490h1V491h2V488h1V490h1V492h1V489h2V493h1V490h2V492h3V490h1V491h2V490h1V489h1V488h1V489h3V486h2V489h2V487h1V490h2V491h3V490h1V492h1V491h1V492h1V493h1V491h1V492h1V493h1V491h1V490h1V491h2V490h1V492h2V490h2V491h1V492h1V491h1V492h1V491h1V490h1V491h1V493h1V491h1V493h1V492h1V490h1V491h2V489h1V491h1V489h1V488h3V489h1V486h1V487h2V489h1V487h1V490h2V488h1V489h1V490h1V491h1V490h1V489h1V492h1V490h2V491h1V489h1V490h1V489h1V491h2V489h1V488h1V490h1V489h1V488h1V489h2V490h4V489h1V491h1V490h2V491h2V490h1V491h2V489h1V491h1V490h1V488h2V491h1V488h4V487h1V490h1V488h3V489h2V490h1V487h1V489h1V488h1V489h2V490h1V488h1V490h1V488h1V490h1V489h1V490h2V488h1V490h1V488h1V490h1V491h1V489h1V490h1V489h1V488h1V491h1V489h2V490h1V489h2V491h1V489h1V490h2V489h1V491h4V489h1V490h1V489h2V490h1V491h1V490h3V488h1V490h1V489h1V490h1V488h2V486h1V488h2V487h1V484h2V485h3V486h3V487h1V484h1V487h1V486h1V488h1V486h1V487h1V488h1V489h1V486h2V489h1V486h1V487h1V488h1V487h3V485h1V488h1V485h1V486h1V485h2V487h1V485h1V488h2V486h1V485h1V487h1V486h2V489h1V488h3V486h1V485h1V487h1V488h1V485h1V486h2V487h1V484h1V485h1V487h1V484h1V485h5V484h1V485h1V486h1V483h1V485h1V483h1V484h2V488h2V486h1V489h5V488h1V490h2V489h2V490h1V489h1V488h1V487h1V488h1V489h1V488h1V489h1V487h1V488h1V487h4V485h1V486h3V484h1V486h1V485h1V484h1V485h1V484h1V485h1V484h2V485h1V488h1V486h1V485h1V488h1V487h1V485h1V488h1V486h1V488h1V489h1V490h1V489h3V490h1V491h1V490h1V487h1V488h1V487h1V489h1V488h1V487h2V485h1V487h1V485h2V487h1V485h1V484h2V486h1V485h1V484h1V487h1V484h1V485h1V486h1V485h1V484h1V485h2V487h2V484h1V485h3V487h1V485h1V488h2V489h1V486h1V487h1V486h1V488h1V489h1V487h1V486h2V488h2V486h1V485h1V486h1V488h1V485h1V488h1V487h3V484h1V485h1V486h1V485h2V483h1V486h1V485h1V486h1V484h1V485h1V484h3V486h1V484h1V483h1V485h1V487h1V488h2V486h1V488h1V487h1V489h2V486h1V489h1V487h1V489h1V488h1V487h1V488h1V490h2V489h2V488h1V490h1V489h2V490h1V488h2V489h1V488h1V486h1V488h1V489h1V488h1V489h1V487h1V489h1V488h1V486h1V485h3V486h1V487h1V491h1V496h1V499h1V502h1V504h1V505h19V507h-19V508h-1V510h-1V513h-1V516h-1V521h-1V525h-1V526h-1V527h-3V526h-1V524h-1V523h-1V525h-1V523h-1V524h-1V523h-1V524h-1V526h-1V524h-1V523h-1V524h-2V522h-1V523h-2V522h-1V524h-1V523h-2V522h-2V524h-1V525h-1V524h-1V523h-1V525h-1V523h-1V526h-1V523h-2V525h-1V524h-1V526h-1V524h-2V525h-1V527h-1V529h-1V528h-1V526h-1V528h-3V527h-1V528h-1V526h-1V527h-1V526h-1V529h-1V527h-2V526h-1V527h-1V528h-1V525h-3V524h-1V527h-1V524h-1V526h-1V527h-1V526h-1V524h-2V526h-2V525h-1V523h-1V524h-1V526h-1V525h-1V526h-1V523h-1V524h-2V527h-1V525h-1V527h-3V528h-1V525h-2V527h-2V528h-1V527h-1V526h-1V527h-1V528h-1V525h-1V528h-1V527h-1V526h-1V528h-2V527h-1V525h-1V527h-2V525h-1V527h-1V525h-2V524h-1V523h-1V525h-1V524h-1V525h-1V522h-1V521h-1V522h-1V523h-3V522h-1V523h-1V524h-1V526h-1V524h-1V527h-1V525h-1V524h-1V527h-1V526h-1V524h-1V527h-1V528h-2V527h-1V528h-1V527h-1V528h-1V527h-1V526h-1V528h-1V526h-3V527h-1V525h-4V524h-1V525h-1V523h-1V524h-1V523h-1V524h-1V525h-1V524h-1V523h-1V522h-1V523h-2V522h-2V524h-1V523h-5V526h-1V524h-2V528h-2V529h-1V527h-1V529h-1V526h-1V527h-1V528h-1V527h-5V528h-1V525h-1V527h-1V528h-1V525h-1V526h-2V527h-1V524h-1V525h-1V527h-1V526h-1V524h-3V523h-1V526h-2V525h-1V527h-1V526h-1V524h-2V527h-1V525h-1V527h-2V526h-1V527h-1V524h-1V527h-1V525h-3V524h-1V525h-1V526h-1V523h-1V526h-2V523h-1V524h-1V525h-1V526h-1V524h-1V526h-1V525h-1V528h-1V525h-1V526h-3V527h-3V528h-2V525h-1V524h-2V526h-1V524h-2V522h-1V523h-1V522h-1V524h-1V522h-3V521h-1V522h-1V523h-2V522h-1V523h-1V521h-4V523h-1V522h-2V523h-1V521h-1V523h-2V522h-1V523h-2V521h-1V524h-1V523h-1V522h-1V523h-1V521h-1V522h-1V524h-1V522h-1V524h-1V522h-2V523h-1V522h-1V524h-1V522h-1V524h-1V522h-1V523h-2V524h-1V523h-1V525h-1V522h-1V523h-2V524h-3V522h-1V525h-1V524h-4V521h-1V524h-2V522h-1V521h-1V523h-1V521h-2V522h-1V521h-2V522h-2V521h-1V523h-1V522h-4V523h-2V524h-1V523h-1V522h-1V524h-1V523h-1V521h-2V523h-1V522h-1V523h-1V521h-1V522h-2V520h-1V523h-1V522h-1V521h-1V522h-1V523h-1V524h-1V522h-2V525h-1V523h-1V525h-2V526h-1V523h-1V524h-3V523h-1V521h-1V523h-1V521h-2V522h-1V520h-1V519h-1V521h-1V519h-1V521h-1V522h-1V521h-1V520h-1V521h-1V520h-1V521h-1V522h-2V520h-2V522h-1V521h-2V522h-1V521h-1V519h-1V520h-1V521h-1V519h-1V520h-1V521h-1V520h-1V522h-1V521h-3V522h-2V525h-1V523h-2V526h-2V523h-3V524h-1V523h-1V522h-1V521h-2V522h-1V520h-3V522h-2V519h-1V523h-2V520h-1V522h-1V524h-1V521h-2V522h-1V524h-1V523h-3V525h-1V524h-1V525h-1V524h-1V525h-1V524h-1V523h-2V526h-2V522h-1V524h-1V523h-1V524h-1V522h-1V524h-1V521h-1V522h-1V523h-1V521h-2V522h-1V521h-1V522h-1V521h-1V523h-1V522h-1V521h-1V523h-1V521h-1V524h-1V522h-1V523h-2V521h-4V522h-1V521h-1V520h-1V522h-2V520h-1V522h-1V520h-2V521h-1V520h-1V523h-2V522h-1V521h-1V524h-1V521h-2V522h-2V523h-1V521h-1V524h-1V523h-2V524h-1V522h-1V523h-1V525h-2V522h-1V524h-1V522h-1V524h-1V523h-2V521h-1V523h-2V521h-1V520h-1V521h-1V522h-1V523h-1V521h-1V523h-1V522h-2V521h-1V522h-1V521h-2V523h-1V522h-1V524h-1V522h-1V523h-1V524h-1V522h-1V524h-1V525h-2V523h-1V525h-2V524h-1V522h-1V524h-1V525h-2V523h-1V524h-1V523h-1V521h-1V524h-1V522h-1V524h-1V521h-1V522h-2V524h-1V521h-3V522h-1V521h-1V522h-1V521h-1V522h-2V521h-1V522h-1V523h-1V521h-3V523h-1V525h-1V514h-3V515h-4V513h-1V515h-2V514h-2V515h-1V514h-1V513h-2V514h-1V515h-4V514h-1V513h-2V514h-2V515h-1V514h-1V516h-2V517h-1V515h-1V513h-1V514h-2V515h-2V514h-1V515h-1V517h-2V518h-1V515h-1V513h-4V514h-1V513h-1V514h-1V515h-4V517h-1V515h-1V514h-3V516h-2V517h-1V514h-1V513h-1V514h-1V513h-1V514h-2V515h-2V513h-2V514h-1V513h-1V515h-1V516h-2V515h-1V513h-1V514h-2V515h-3V513h-1V512h-1V513h-2V514h-1V513h-1V514h-1V515h-1V514h-1V512h-1V513h-2V514h-1V515h-1V514h-1V513h-1V512h-1V513h-3V514h-1V513h-1V514h-1V515h-3V516h-2V513h-3V514h-3V515h-1V516h-1V514h-5V512h-1V513h-1V512h-1V513h-4V514h-4V515h-1V514h-2V515h-1V513h-1V512h-1V514h-1V513h-1V514h-3V515h-2V517h-1V513h-2V512h-9V513h-1V512h-3V514h-1V513h-2V515h-1V512h-2V511h-1V512h-2V511h-1V513h-1V512h-1V513h-2V512h-1V513h-1V512h-2V513h-5V514h-2V513h-2V514h-1V515h-3V516h-1V513h-1V514h-4V513h-2V514h-3V515h-1V514h-3V513h-1V514h-1V513h-3V514h-3V513h-1V514h-1V515h-3V517h-1V513h-2V514h-1V513h-1V514h-4V515h-1V513h-2V515h-3V513h-2V512h-1V513h-3V515h-1V514h-1V515h-3V517h-1V516h-1V515h-1V513h-1V514h-3V515h-1V516h-1V514h-1V513h-1V514h-1V513h-1V515h-1V514h-1V515h-4V514h-1V513h-1V514h-1V515h-2V514h-1V515h-1V516h-2V517h-2V516h-1V517h-1V514h-1V513h-3V514h-1V513h-1V514h-2V515h-2V514h-1V515h-2V516h-1V513h-1V515h-1V514h-1V515h-2V513h-1V514h-3V515h-1V516h-3V517h-1V514h-2V515h-1V514h-1V515h-2V514h-1V513h-1V512h-1V513h-4V514h-1V515h-2V513h-6V514h-2V515h-1V514h-1V515h-3V514h-1V513h-1V512h-2V513h-3V512h-1V513h-1V514h-1V513h-1V515h-1V514h-2V515h-1V513h-1V514h-1V513h-1V514h-2V515h-2V516h-1V515h-1V517h-3V514h-2V513h-1V512h-1V513h-6V514h-2V515h-1V514h-1V515h-1V514h-1V513h-2V514h-2V513h-1V514h-1V515h-1V516h-1V515h-1V517h-2V519h-1V516h-1V518h-1V513h-2V512h-1V513h-4V514h-1V513h-1V514h-3V516h-2V513h-2Z" fill="#6464dc"/>
</svg>
<!-- vertical scrollbar -->
<div class="a" style="left:1360px;top:172px;width:22px;height:443px;background:#f0f0f0"></div>
<div class="a" style="left:1361px;top:193px;width:19px;height:367px;background:#cdcdcd"></div>
<svg class="a" style="left:1360px;top:172px" width="22" height="443" viewBox="0 0 22 443">
  <path d="M6.500 13.500L10.700 9L15 13.500M6.500 431L10.700 435.500L15 431" stroke="#555" stroke-width="2.200" fill="none"/>
</svg>
<!-- horizontal scrollbar -->
<div class="a" style="left:1px;top:615px;width:1381px;height:22px;background:#f0f0f0"></div>
<div class="a" style="left:317px;top:618px;width:929px;height:18px;background:#cdcdcd"></div>
<svg class="a" style="left:0;top:615px" width="1382" height="21" viewBox="0 0 1382 21">
  <path d="M183.500 7L179 11.200L183.500 15.500M1347 7L1351.500 11.200L1347 15.500" stroke="#555" stroke-width="2.200" fill="none"/>
</svg>
<!-- bottom toolbar dock -->
<div class="a" id="bb"></div>
<div class="grab" style="left:6px;top:644px;height:57px"></div>
<div class="vl" style="left:14px;top:638px;height:69px"></div>
<div class="lab" style="left:22px;top:647px;font-size:15.100px">Project Rate (Hz)</div>
<div class="a" style="left:145px;top:645px;width:1px;height:20px;background:#8c8c8c"></div>
<div class="lab" style="left:153px;top:647px;font-size:15.600px">Snap-To</div>
<div class="a" style="left:246px;top:645px;width:1px;height:20px;background:#8c8c8c"></div>
<div class="combo" style="left:22px;top:674px;width:116px;background:#fff;border-color:#7a7a7a">44100</div>
<div class="a" style="left:145px;top:680px;width:1px;height:19px;background:#8c8c8c"></div>
<div class="combo" style="left:154px;top:674px;width:85px;padding-left:5px;font-size:15px">Off</div>
<div class="a" style="left:246px;top:680px;width:1px;height:19px;background:#8c8c8c"></div>
<div class="combo" style="left:255px;top:639px;width:397px;font-size:14.500px;padding-left:4px;line-height:27px">Start and End of Selection</div>
<svg class="a" style="left:0;top:636px" width="700" height="70" viewBox="0 0 700 70">
  <path d="M121.500 48.500L126.500 53.500L131.500 48.500M222.500 48.500L227.500 53.500L232.500 48.500M635.500 14.500L640.500 19.500L645.500 14.500" stroke="#444" stroke-width="1.200" fill="none"/>
</svg>
<!-- time controls -->
<div class="tc" style="left:255px;top:674px;width:195px">
 <span style="left:0;width:15px">0</span><span style="left:15px;width:14px">0</span><span class="u" style="left:29px;width:15px">h</span><span style="left:44px;width:14px">0</span><span style="left:58px;width:14px">1</span><span class="u" style="left:72px;width:20px">m</span><span style="left:92px;width:14px">5</span><span style="left:106px;width:14px">9</span><span style="left:120px;width:4px">.</span><span style="left:124px;width:14px">9</span><span style="left:138px;width:14px">9</span><span style="left:152px;width:14px">9</span><span class="u" style="left:166px;width:14px">s</span><span class="u" style="left:181px;width:12px;background:#a8acc0"></span>
</div>
<div class="tc" style="left:457px;top:674px;width:195px">
 <span style="left:0;width:15px">0</span><span style="left:15px;width:14px">0</span><span class="u" style="left:29px;width:15px">h</span><span style="left:44px;width:14px">0</span><span style="left:58px;width:14px">2</span><span class="u" style="left:72px;width:20px">m</span><span style="left:92px;width:14px">3</span><span style="left:106px;width:14px">3</span><span style="left:120px;width:4px">.</span><span style="left:124px;width:14px">4</span><span style="left:138px;width:14px">6</span><span style="left:152px;width:14px">0</span><span class="u" style="left:166px;width:14px">s</span><span class="u" style="left:181px;width:12px;background:#a8acc0"></span>
</div>
<svg class="a" style="left:0;top:636px" width="1382" height="70" viewBox="0 0 1382 70">
  <path d="M438.500 49.500H447.500L443 54.500ZM640.500 49.500H649.500L645 54.500Z" fill="#000"/>
</svg>
<div class="vl" style="left:660px;top:638px;height:69px"></div>
<div class="grab" style="left:664px;top:644px;height:57px"></div>
<div class="vl" style="left:672px;top:638px;height:69px"></div>
<div class="tc big-tc" style="left:675px;top:647px;width:281px;height:48px;background:#d0d0d2">
 <span style="left:0;width:26px">0</span><span style="left:26px;width:25px">0</span><span class="u" style="left:51px;width:39px">h</span><span style="left:90px;width:25px">0</span><span style="left:115px;width:25px">2</span><span class="u" style="left:140px;width:48px">m</span><span style="left:188px;width:25px">0</span><span style="left:213px;width:25px">0</span><span class="u" style="left:238px;width:29px;padding-left:6px">s</span><span class="u" style="left:267px;width:11px;background:#a8acc0"></span>
</div>
<svg class="a" style="left:0;top:636px" width="1382" height="70" viewBox="0 0 1382 70">
  <path d="M944.500 33.500H953.500L949 38.500Z" fill="#000"/>
</svg>
<div class="vl" style="left:968px;top:638px;height:69px;background:#c8c8ce"></div>
<div class="vl" style="left:972px;top:638px;height:69px;background:#c8c8ce"></div>
<!-- play at speed -->
<div class="a" style="left:973px;top:672px;width:409px;height:1px;background:#c8c8ce"></div>
<div class="grab" style="left:978px;top:645px;height:22px"></div>
<div class="vl" style="left:986px;top:638px;height:34px"></div>
<div class="sm" style="left:989px;top:639px;width:34px;height:33px"></div>
<svg class="a" style="left:988px;top:638px" width="230" height="34" viewBox="0 0 230 34">
  <path d="M9.200 8.800L24.800 16.400L9.200 24Z" fill="#3d8a5f" stroke="#3d8a5f" stroke-width="2" stroke-linejoin="round"/>
  <path d="M43.600 15.500V21.600M55.600 18.000V21.600M67.600 18.000V21.600M79.600 18.000V21.600M91.600 18.000V21.600M103.600 18.000V21.600M115.600 18.000V21.600M127.600 18.000V21.600M139.600 18.000V21.600M151.600 18.000V21.600M163.600 18.000V21.600M175.600 18.000V21.600M187.600 18.000V21.600M199.600 18.000V21.600M211.600 15.500V21.600" stroke="#f0f2fa" stroke-width="1" fill="none"/>
  <path d="M42.600 15.500V21.600M54.600 18.000V21.600M66.600 18.000V21.600M78.600 18.000V21.600M90.600 18.000V21.600M102.600 18.000V21.600M114.600 18.000V21.600M126.600 18.000V21.600M138.600 18.000V21.600M150.600 18.000V21.600M162.600 18.000V21.600M174.600 18.000V21.600M186.600 18.000V21.600M198.600 18.000V21.600M210.600 15.500V21.600" stroke="#a4a4a8" stroke-width="1" fill="none"/>
  <path d="M40.200 22.600H213.200" stroke-width="2" stroke="#a4a4a6"/>
  <path d="M40.200 9.300H46.800M202.800 9.300H209.200M206 6.100V12.500" stroke="#000" stroke-width="1.400"/>
  <rect x="92.700" y="11" width="11" height="21" rx="2.800" fill="#fbfbfd" stroke="#5c5c5c" stroke-width="1.100"/>
  <rect x="97.100" y="18.200" width="2.200" height="6" fill="#6c6c6c"/>
</svg>
<div class="vl" style="left:1209px;top:638px;height:34px;background:#c8c8ce"></div>
<div class="vl" style="left:1213px;top:638px;height:34px;background:#c8c8ce"></div>
<!-- status bar -->
<div class="a" id="status"></div>
<div class="t" style="left:19px;top:717px;font-size:14.500px;color:#111">Stopped.</div>
<div class="a" style="left:13px;top:710px;width:1px;height:24px;background:#dcdcdc"></div>
<div class="a" style="left:227px;top:710px;width:1px;height:24px;background:#d2d2d2"></div>
<div class="a" style="left:1157px;top:710px;width:1px;height:24px;background:#d2d2d2"></div>
<svg class="a" style="left:1366px;top:721px" width="14" height="14" viewBox="0 0 14 14">
  <g fill="#b4b4b4"><rect x="10" y="2" width="2" height="2"/><rect x="6" y="6" width="2" height="2"/><rect x="10" y="6" width="2" height="2"/><rect x="2" y="10" width="2" height="2"/><rect x="6" y="10" width="2" height="2"/><rect x="10" y="10" width="2" height="2"/></g>
</svg>
</body>
</html>
